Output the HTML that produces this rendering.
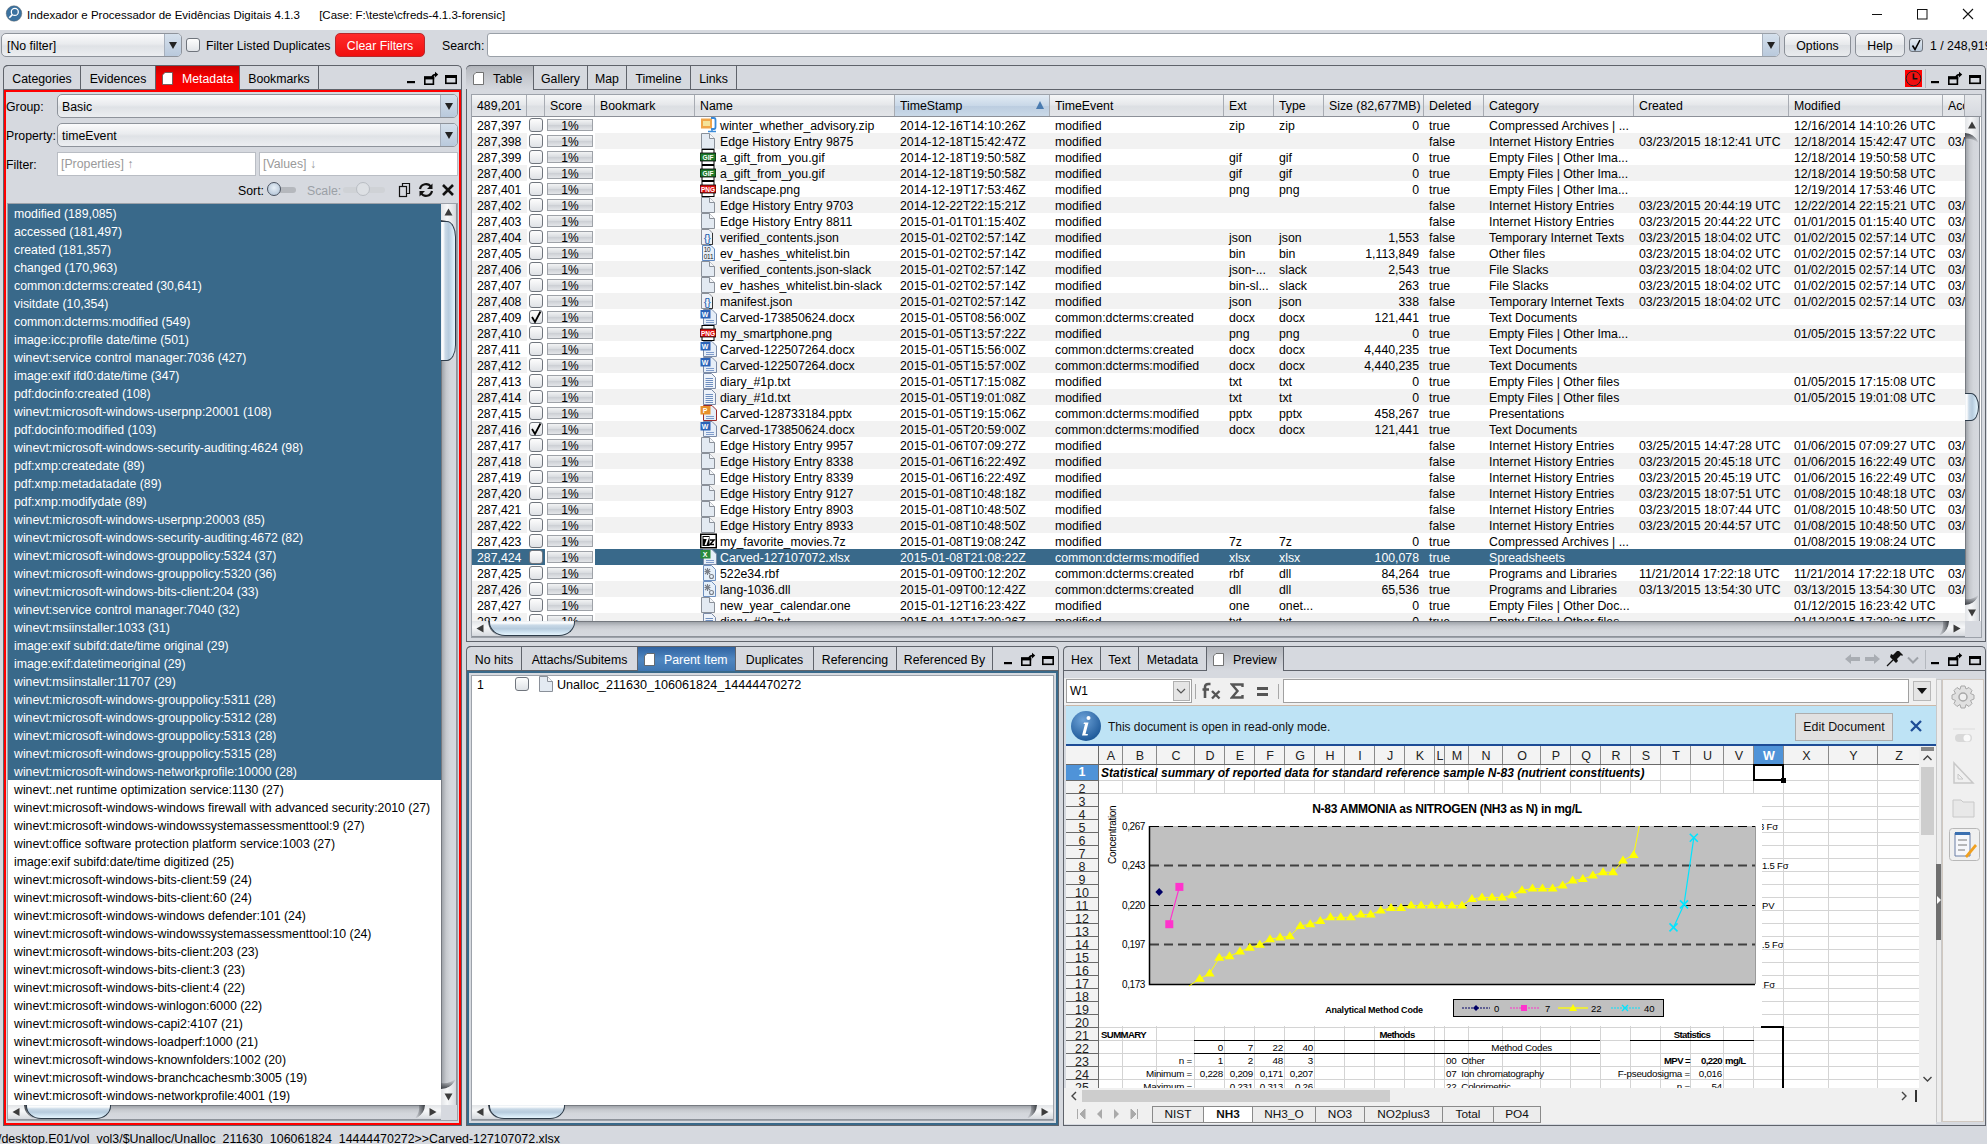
<!DOCTYPE html><html><head><meta charset="utf-8"><style>
*{margin:0;padding:0;box-sizing:border-box}
html,body{width:1987px;height:1144px;overflow:hidden;background:#d6d9df;font-family:"Liberation Sans",sans-serif;font-size:12.3px;color:#000}
div{position:absolute}
.t{white-space:pre;line-height:16px;height:16px}
.combo{border:1px solid #8e939b;border-radius:5px;background:linear-gradient(#fbfbfc,#e9ebee 45%,#dfe2e6 55%,#eceef1)}
.carr{position:absolute;right:0;top:0;bottom:0;width:17px;border-left:1px solid #a7b0bd;border-radius:0 4px 4px 0;background:linear-gradient(#d5e0ec,#b9c9dc)}
.carr:after{content:"";position:absolute;left:4px;top:8px;border-left:4.5px solid transparent;border-right:4.5px solid transparent;border-top:7px solid #222}
.btn{border:1px solid #8a8f97;border-radius:5px;background:linear-gradient(#fbfbfc,#e6e8eb 50%,#dcdfe3 52%,#e9ebee);text-align:center;line-height:24px}
.chk{border:1px solid #6f747c;border-radius:3px;background:linear-gradient(#fdfdfd,#e1e4e8)}
.tab{border:1px solid #6c7078;border-bottom:none;border-radius:0;line-height:22px;text-align:center;background:linear-gradient(#dfe2e6,#d3d6dc)}
.field{background:#fff;border:1px solid #b9bdc4}
</style></head><body><div style="left:0px;top:0px;width:1987px;height:30px;background:#fff"></div>
<svg style="position:absolute;left:5px;top:5px" width="18" height="18" viewBox="0 0 18 18"><circle cx="9" cy="8.5" r="7.8" fill="#3b72a0" stroke="#555" stroke-width="0.4"/><circle cx="9.8" cy="6.9" r="3.5" fill="#3b72a0" stroke="#fff" stroke-width="1.3"/><path d="M7.3 9.6 L4.3 12.8" stroke="#fff" stroke-width="1.6"/></svg>
<div class="t" style="left:27px;top:7px;font-size:11.5px">Indexador e Processador de Evidências Digitais 4.1.3      [Case: F:\teste\cfreds-4.1.3-forensic]</div>
<svg style="position:absolute;left:1866px;top:5px" width="112" height="18" viewBox="0 0 112 18"><path d="M6 9.5 H16" stroke="#111" stroke-width="1"/><rect x="51.5" y="4.5" width="9.5" height="9.5" fill="none" stroke="#111"/><path d="M97 4 L107 14 M107 4 L97 14" stroke="#111" stroke-width="1.1"/></svg>
<div class="combo" style="left:1px;top:33px;width:181px;height:24px;"><div class="t" style="left:5px;top:4px">[No filter]</div><div class="carr"></div></div>
<div class="chk" style="left:186px;top:38px;width:14px;height:14px;"></div>
<div class="t" style="left:206px;top:38px;">Filter Listed Duplicates</div>
<div style="left:335px;top:33px;width:90px;height:24px;background:linear-gradient(#ff2a2a,#f01010);border:1px solid #b8282b;border-radius:5px;color:#fff;text-align:center;line-height:24px">Clear Filters</div>
<div class="t" style="left:442px;top:38px;">Search:</div>
<div style="left:487px;top:33px;width:1293px;height:24px;background:#fff;border:1px solid #9aa0a8;border-radius:3px 5px 5px 3px"><div class="carr"></div></div>
<div class="btn" style="left:1784px;top:33px;width:67px;height:24px;">Options</div>
<div class="btn" style="left:1855px;top:33px;width:50px;height:24px;">Help</div>
<div class="chk" style="left:1909px;top:38px;width:14px;height:14px;background:linear-gradient(#e6edf5,#b7c8da)"><svg width="12" height="12" style="position:absolute;left:0;top:0"><path d="M2.5 6.5 L5 10.5 L10 1" stroke="#000" stroke-width="1.6" fill="none"/></svg></div>
<div class="t" style="left:1930px;top:38px;">1 / 248,919</div>
<div style="left:3px;top:65px;width:459px;height:25px;border:1px solid #5f636b;border-bottom:none;border-radius:5px 5px 0 0;background:#d6d9df"></div>
<div style="left:3px;top:65px;width:78px;height:25px;border-right:1px solid #5f636b;border-top:1px solid #5f636b;border-radius:5px 0 0 0;"></div>
<div style="left:80px;top:65px;width:76px;height:25px;border-right:1px solid #5f636b;border-left:1px solid #5f636b;border-top:1px solid #5f636b;"></div>
<div style="left:155px;top:65px;width:85px;height:25px;border-right:1px solid #5f636b;border-left:1px solid #5f636b;border-top:1px solid #5f636b;background:linear-gradient(#c80000,#f00000 40%,#ff0000);border-color:#5f636b;"></div>
<div style="left:239px;top:65px;width:80px;height:25px;border-right:1px solid #5f636b;border-left:1px solid #5f636b;border-top:1px solid #5f636b;"></div>
<div style="left:3px;top:89px;width:152px;height:1px;background:#5f636b"></div>
<div style="left:239px;top:89px;width:223px;height:1px;background:#5f636b"></div>
<div style="left:3px;top:89px;width:459px;height:1037px;border:1px solid #5f636b;border-top:none;border-left:1px solid #5f636b;"></div>
<div style="left:4px;top:90px;width:457px;height:1035px;border:2px solid #ff0000"></div>
<div class="t" style="left:3px;top:71px;width:78px;text-align:center;color:#000">Categories</div>
<div class="t" style="left:80px;top:71px;width:76px;text-align:center;color:#000">Evidences</div>
<svg style="position:absolute;left:162px;top:72px" width="11" height="13" viewBox="0 0 11 13"><path d="M3 0.5 H10.5 V12.5 H0.5 V3 Z" fill="#fff" stroke="#555" stroke-width="0.8"/></svg>
<div class="t" style="left:182px;top:71px;color:#fff">Metadata</div>
<div class="t" style="left:239px;top:71px;width:80px;text-align:center;color:#000">Bookmarks</div>
<svg style="position:absolute;left:406px;top:70px" width="52" height="16" viewBox="0 0 52 16"><rect x="1" y="11" width="8" height="2.2" fill="#000"/><rect x="18.8" y="7.2" width="8.6" height="7" fill="none" stroke="#000" stroke-width="1.6"/><rect x="18" y="6.4" width="10.2" height="3" fill="#000"/><path d="M26 7.5 Q26.5 4.6 29.5 4.6 H30" stroke="#000" stroke-width="1.6" fill="none"/><path d="M29 1.8 L32.2 4.6 L29 7.4 Z" fill="#000"/><rect x="39.8" y="5.8" width="10.4" height="7.5" fill="none" stroke="#000" stroke-width="1.6"/><rect x="39" y="5" width="12" height="3" fill="#000"/></svg>
<div class="t" style="left:6px;top:99px;">Group:</div>
<div class="combo" style="left:57px;top:94px;width:401px;height:24px;"><div class="t" style="left:4px;top:4px">Basic</div><div class="carr"></div></div>
<div class="t" style="left:6px;top:128px;">Property:</div>
<div class="combo" style="left:57px;top:123px;width:401px;height:24px;"><div class="t" style="left:4px;top:4px">timeEvent</div><div class="carr"></div></div>
<div class="t" style="left:6px;top:157px;">Filter:</div>
<div class="field" style="left:57px;top:152px;width:199px;height:24px;"><div class="t" style="left:3px;top:3px;color:#9a9a9a">[Properties] ↑</div></div>
<div class="field" style="left:259px;top:152px;width:199px;height:24px;"><div class="t" style="left:3px;top:3px;color:#9a9a9a">[Values] ↓</div></div>
<div class="t" style="left:238px;top:183px;">Sort:</div>
<div style="left:276px;top:187px;width:20px;height:6px;border-radius:3px;background:#b5b8bd"></div>
<div style="left:267px;top:182px;width:14px;height:14px;border-radius:7px;border:1px solid #4a5260;background:radial-gradient(circle at 50% 40%,#e8f0f8,#a9bcd0)"></div>
<div class="t" style="left:307px;top:183px;color:#9ba0a6">Scale:</div>
<div style="left:343px;top:187px;width:42px;height:6px;border-radius:3px;background:#cfd2d6"></div>
<div style="left:356px;top:182px;width:14px;height:14px;border-radius:7px;border:1px solid #b9bdc3;background:#dde0e4"></div>
<svg style="position:absolute;left:398px;top:182px" width="60" height="16" viewBox="0 0 60 16"><rect x="1.5" y="4.5" width="7" height="10" fill="none" stroke="#111" stroke-width="1.2"/><path d="M4.5 4.5 V1.5 H11.5 V11.5 H8.5" fill="none" stroke="#111" stroke-width="1.2"/><path d="M22 7 A6 6 0 0 1 33 5" fill="none" stroke="#111" stroke-width="2.2"/><path d="M34.5 1.5 V7 H29 Z" fill="#111"/><path d="M34 9 A6 6 0 0 1 23 11" fill="none" stroke="#111" stroke-width="2.2"/><path d="M21.5 14.5 V9 H27 Z" fill="#111"/><path d="M45 3 L55 13 M55 3 L45 13" stroke="#111" stroke-width="2.6"/></svg>
<div style="left:7px;top:203px;width:451px;height:918px;border:1px solid #9da2aa;background:#fff"></div>
<div style="left:8px;top:204px;width:433px;height:576px;background:#39698a"></div>
<div class="t" style="left:14px;top:206px;color:#fff">modified (189,085)</div>
<div class="t" style="left:14px;top:224px;color:#fff">accessed (181,497)</div>
<div class="t" style="left:14px;top:242px;color:#fff">created (181,357)</div>
<div class="t" style="left:14px;top:260px;color:#fff">changed (170,963)</div>
<div class="t" style="left:14px;top:278px;color:#fff">common:dcterms:created (30,641)</div>
<div class="t" style="left:14px;top:296px;color:#fff">visitdate (10,354)</div>
<div class="t" style="left:14px;top:314px;color:#fff">common:dcterms:modified (549)</div>
<div class="t" style="left:14px;top:332px;color:#fff">image:icc:profile date/time (501)</div>
<div class="t" style="left:14px;top:350px;color:#fff">winevt:service control manager:7036 (427)</div>
<div class="t" style="left:14px;top:368px;color:#fff">image:exif ifd0:date/time (347)</div>
<div class="t" style="left:14px;top:386px;color:#fff">pdf:docinfo:created (108)</div>
<div class="t" style="left:14px;top:404px;color:#fff">winevt:microsoft-windows-userpnp:20001 (108)</div>
<div class="t" style="left:14px;top:422px;color:#fff">pdf:docinfo:modified (103)</div>
<div class="t" style="left:14px;top:440px;color:#fff">winevt:microsoft-windows-security-auditing:4624 (98)</div>
<div class="t" style="left:14px;top:458px;color:#fff">pdf:xmp:createdate (89)</div>
<div class="t" style="left:14px;top:476px;color:#fff">pdf:xmp:metadatadate (89)</div>
<div class="t" style="left:14px;top:494px;color:#fff">pdf:xmp:modifydate (89)</div>
<div class="t" style="left:14px;top:512px;color:#fff">winevt:microsoft-windows-userpnp:20003 (85)</div>
<div class="t" style="left:14px;top:530px;color:#fff">winevt:microsoft-windows-security-auditing:4672 (82)</div>
<div class="t" style="left:14px;top:548px;color:#fff">winevt:microsoft-windows-grouppolicy:5324 (37)</div>
<div class="t" style="left:14px;top:566px;color:#fff">winevt:microsoft-windows-grouppolicy:5320 (36)</div>
<div class="t" style="left:14px;top:584px;color:#fff">winevt:microsoft-windows-bits-client:204 (33)</div>
<div class="t" style="left:14px;top:602px;color:#fff">winevt:service control manager:7040 (32)</div>
<div class="t" style="left:14px;top:620px;color:#fff">winevt:msiinstaller:1033 (31)</div>
<div class="t" style="left:14px;top:638px;color:#fff">image:exif subifd:date/time original (29)</div>
<div class="t" style="left:14px;top:656px;color:#fff">image:exif:datetimeoriginal (29)</div>
<div class="t" style="left:14px;top:674px;color:#fff">winevt:msiinstaller:11707 (29)</div>
<div class="t" style="left:14px;top:692px;color:#fff">winevt:microsoft-windows-grouppolicy:5311 (28)</div>
<div class="t" style="left:14px;top:710px;color:#fff">winevt:microsoft-windows-grouppolicy:5312 (28)</div>
<div class="t" style="left:14px;top:728px;color:#fff">winevt:microsoft-windows-grouppolicy:5313 (28)</div>
<div class="t" style="left:14px;top:746px;color:#fff">winevt:microsoft-windows-grouppolicy:5315 (28)</div>
<div class="t" style="left:14px;top:764px;color:#fff">winevt:microsoft-windows-networkprofile:10000 (28)</div>
<div class="t" style="left:14px;top:782px;color:#000">winevt:.net runtime optimization service:1130 (27)</div>
<div class="t" style="left:14px;top:800px;color:#000">winevt:microsoft-windows-windows firewall with advanced security:2010 (27)</div>
<div class="t" style="left:14px;top:818px;color:#000">winevt:microsoft-windows-windowssystemassessmenttool:9 (27)</div>
<div class="t" style="left:14px;top:836px;color:#000">winevt:office software protection platform service:1003 (27)</div>
<div class="t" style="left:14px;top:854px;color:#000">image:exif subifd:date/time digitized (25)</div>
<div class="t" style="left:14px;top:872px;color:#000">winevt:microsoft-windows-bits-client:59 (24)</div>
<div class="t" style="left:14px;top:890px;color:#000">winevt:microsoft-windows-bits-client:60 (24)</div>
<div class="t" style="left:14px;top:908px;color:#000">winevt:microsoft-windows-windows defender:101 (24)</div>
<div class="t" style="left:14px;top:926px;color:#000">winevt:microsoft-windows-windowssystemassessmenttool:10 (24)</div>
<div class="t" style="left:14px;top:944px;color:#000">winevt:microsoft-windows-bits-client:203 (23)</div>
<div class="t" style="left:14px;top:962px;color:#000">winevt:microsoft-windows-bits-client:3 (23)</div>
<div class="t" style="left:14px;top:980px;color:#000">winevt:microsoft-windows-bits-client:4 (22)</div>
<div class="t" style="left:14px;top:998px;color:#000">winevt:microsoft-windows-winlogon:6000 (22)</div>
<div class="t" style="left:14px;top:1016px;color:#000">winevt:microsoft-windows-capi2:4107 (21)</div>
<div class="t" style="left:14px;top:1034px;color:#000">winevt:microsoft-windows-loadperf:1000 (21)</div>
<div class="t" style="left:14px;top:1052px;color:#000">winevt:microsoft-windows-knownfolders:1002 (20)</div>
<div class="t" style="left:14px;top:1070px;color:#000">winevt:microsoft-windows-branchcachesmb:3005 (19)</div>
<div class="t" style="left:14px;top:1088px;color:#000">winevt:microsoft-windows-networkprofile:4001 (19)</div>
<div style="left:441px;top:204px;width:16px;height:901px;background:linear-gradient(90deg,#5d6168,#a4a8ae 10%,#c6c9ce 35%,#d3d6db 60%,#d6d9df);border-right:1px solid #8d9299"></div>
<svg style="position:absolute;left:441px;top:204px" width="15" height="26" viewBox="0 0 15 26"><defs><linearGradient id="cg1" x1="0" y1="0" x2="1" y2="0"><stop offset="0" stop-color="#e2e4e7"/><stop offset="0.45" stop-color="#f7f8f9"/><stop offset="1" stop-color="#dadde1"/></linearGradient><linearGradient id="cg1s" x1="0" y1="0" x2="0" y2="1"><stop offset="0" stop-color="#5a5e64" stop-opacity="0"/><stop offset="1" stop-color="#303338" stop-opacity="0.9"/></linearGradient></defs><g transform="matrix(1,0,0,-1,0,26)"><path d="M0 4 Q9 5 14 0 V2 Q9 10 0 10 Z" fill="url(#cg1s)"/><path d="M0 26 V10 Q9 10 14 2 V26 Z" fill="url(#cg1)"/><path d="M3.5 14.5 H11.5 L7.5 21.5 Z" fill="#3c3c3c"/></g></svg>
<svg style="position:absolute;left:441px;top:1079px" width="15" height="26" viewBox="0 0 15 26"><defs><linearGradient id="cg2" x1="0" y1="0" x2="1" y2="0"><stop offset="0" stop-color="#e2e4e7"/><stop offset="0.45" stop-color="#f7f8f9"/><stop offset="1" stop-color="#dadde1"/></linearGradient><linearGradient id="cg2s" x1="0" y1="0" x2="0" y2="1"><stop offset="0" stop-color="#5a5e64" stop-opacity="0"/><stop offset="1" stop-color="#303338" stop-opacity="0.9"/></linearGradient></defs><g transform="matrix(1,0,0,1,0,0)"><path d="M0 4 Q9 5 14 0 V2 Q9 10 0 10 Z" fill="url(#cg2s)"/><path d="M0 26 V10 Q9 10 14 2 V26 Z" fill="url(#cg2)"/><path d="M3.5 14.5 H11.5 L7.5 21.5 Z" fill="#3c3c3c"/></g></svg>
<div style="left:441px;top:221px;width:15px;height:140px;border:1px solid #2e3c4a;border-left:none;border-radius:0 9px 9px 0 / 0 16px 16px 0;background:linear-gradient(90deg,#e9eef3,#ffffff 14%,#c9d9e7 30%,#b6cbdd 55%,#cfe3f1 80%,#e6f5fd)"></div>
<div style="left:8px;top:1105px;width:433px;height:15px;background:linear-gradient(#5d6168,#a4a8ae 10%,#c6c9ce 35%,#d3d6db 60%,#d6d9df);border-bottom:1px solid #8d9299"></div>
<svg style="position:absolute;left:8px;top:1105px" width="26" height="14" viewBox="0 0 26 14"><defs><linearGradient id="cg3" x1="0" y1="0" x2="1" y2="0"><stop offset="0" stop-color="#e2e4e7"/><stop offset="0.45" stop-color="#f7f8f9"/><stop offset="1" stop-color="#dadde1"/></linearGradient><linearGradient id="cg3s" x1="0" y1="0" x2="0" y2="1"><stop offset="0" stop-color="#5a5e64" stop-opacity="0"/><stop offset="1" stop-color="#303338" stop-opacity="0.9"/></linearGradient></defs><g transform="matrix(0,1,-1,0,26,0)"><path d="M0 4 Q8 5 13 0 V2 Q8 10 0 10 Z" fill="url(#cg3s)"/><path d="M0 26 V10 Q8 10 13 2 V26 Z" fill="url(#cg3)"/><path d="M3.0 14.5 H11.0 L7.0 21.5 Z" fill="#3c3c3c"/></g></svg>
<svg style="position:absolute;left:415px;top:1105px" width="26" height="14" viewBox="0 0 26 14"><defs><linearGradient id="cg4" x1="0" y1="0" x2="1" y2="0"><stop offset="0" stop-color="#e2e4e7"/><stop offset="0.45" stop-color="#f7f8f9"/><stop offset="1" stop-color="#dadde1"/></linearGradient><linearGradient id="cg4s" x1="0" y1="0" x2="0" y2="1"><stop offset="0" stop-color="#5a5e64" stop-opacity="0"/><stop offset="1" stop-color="#303338" stop-opacity="0.9"/></linearGradient></defs><g transform="matrix(0,1,1,0,0,0)"><path d="M0 4 Q8 5 13 0 V2 Q8 10 0 10 Z" fill="url(#cg4s)"/><path d="M0 26 V10 Q8 10 13 2 V26 Z" fill="url(#cg4)"/><path d="M3.0 14.5 H11.0 L7.0 21.5 Z" fill="#3c3c3c"/></g></svg>
<div style="left:26px;top:1105px;width:85px;height:14px;border:1px solid #2e3c4a;border-top:none;border-radius:0 0 15px 15px / 0 0 13px 13px;background:linear-gradient(#e9eef3,#ffffff 14%,#c9d9e7 30%,#b6cbdd 55%,#cfe3f1 80%,#e6f5fd)"></div>
<div style="left:441px;top:1105px;width:16px;height:15px;background:#d6d9df"></div>
<div style="left:466px;top:65px;width:1520px;height:25px;border:1px solid #5f636b;border-bottom:none;border-radius:5px 5px 0 0;background:#d6d9df"></div>
<div style="left:466px;top:65px;width:68px;height:25px;border-right:1px solid #5f636b;border-top:1px solid #5f636b;border-radius:5px 0 0 0;background:linear-gradient(#b3b6bc,#c9ccd2 60%,#d6d9df);"></div>
<div style="left:533px;top:65px;width:55px;height:25px;border-right:1px solid #5f636b;border-left:1px solid #5f636b;border-top:1px solid #5f636b;"></div>
<div style="left:587px;top:65px;width:40px;height:25px;border-right:1px solid #5f636b;border-left:1px solid #5f636b;border-top:1px solid #5f636b;"></div>
<div style="left:626px;top:65px;width:65px;height:25px;border-right:1px solid #5f636b;border-left:1px solid #5f636b;border-top:1px solid #5f636b;"></div>
<div style="left:690px;top:65px;width:47px;height:25px;border-right:1px solid #5f636b;border-left:1px solid #5f636b;border-top:1px solid #5f636b;"></div>
<div style="left:466px;top:89px;width:0px;height:1px;background:#5f636b"></div>
<div style="left:533px;top:89px;width:1453px;height:1px;background:#5f636b"></div>
<div style="left:466px;top:89px;width:1520px;height:553px;border:1px solid #5f636b;border-top:none;"></div>
<svg style="position:absolute;left:473px;top:72px" width="11" height="13" viewBox="0 0 11 13"><path d="M3 0.5 H10.5 V12.5 H0.5 V3 Z" fill="#fff" stroke="#555" stroke-width="0.8"/></svg>
<div class="t" style="left:493px;top:71px;color:#000">Table</div>
<div class="t" style="left:533px;top:71px;width:55px;text-align:center;color:#000">Gallery</div>
<div class="t" style="left:587px;top:71px;width:40px;text-align:center;color:#000">Map</div>
<div class="t" style="left:626px;top:71px;width:65px;text-align:center;color:#000">Timeline</div>
<div class="t" style="left:690px;top:71px;width:47px;text-align:center;color:#000">Links</div>
<svg style="position:absolute;left:1905px;top:70px" width="17" height="17" viewBox="0 0 17 17"><rect width="17" height="17" fill="#f00"/><circle cx="8.5" cy="8.5" r="7.3" fill="#f01010" stroke="#222" stroke-width="1"/><path d="M8.5 3.5 V8.8 H12.5" stroke="#111" stroke-width="1.6" fill="none"/></svg>
<div style="left:1925px;top:69px;width:1px;height:19px;background:#b4b8be"></div>
<svg style="position:absolute;left:1930px;top:70px" width="52" height="16" viewBox="0 0 52 16"><rect x="1" y="11" width="8" height="2.2" fill="#000"/><rect x="18.8" y="7.2" width="8.6" height="7" fill="none" stroke="#000" stroke-width="1.6"/><rect x="18" y="6.4" width="10.2" height="3" fill="#000"/><path d="M26 7.5 Q26.5 4.6 29.5 4.6 H30" stroke="#000" stroke-width="1.6" fill="none"/><path d="M29 1.8 L32.2 4.6 L29 7.4 Z" fill="#000"/><rect x="39.8" y="5.8" width="10.4" height="7.5" fill="none" stroke="#000" stroke-width="1.6"/><rect x="39" y="5" width="12" height="3" fill="#000"/></svg>
<div style="left:471px;top:94px;width:1511px;height:544px;border:1px solid #9da2aa;background:#fff"></div>
<div style="left:472px;top:95px;width:1493px;height:22px;background:linear-gradient(#f6f7f8,#e6e8eb 45%,#dcdfe3 55%,#e3e5e8);border-bottom:1px solid #8c9098"></div>
<div style="left:895px;top:95px;width:155px;height:22px;background:linear-gradient(#e2ebf4,#c9d8e8 50%,#bccde0 55%,#cad9e8);border-bottom:1px solid #8c9098"></div>
<div style="left:526px;top:95px;width:1px;height:21px;background:#a8acb3"></div>
<div class="t" style="left:477px;top:98px;width:49px;overflow:hidden">489,201</div>
<div style="left:544px;top:95px;width:1px;height:21px;background:#a8acb3"></div>
<div style="left:594px;top:95px;width:1px;height:21px;background:#a8acb3"></div>
<div class="t" style="left:550px;top:98px;width:44px;overflow:hidden">Score</div>
<div style="left:694px;top:95px;width:1px;height:21px;background:#a8acb3"></div>
<div class="t" style="left:600px;top:98px;width:94px;overflow:hidden">Bookmark</div>
<div style="left:894px;top:95px;width:1px;height:21px;background:#a8acb3"></div>
<div class="t" style="left:700px;top:98px;width:194px;overflow:hidden">Name</div>
<div style="left:1049px;top:95px;width:1px;height:21px;background:#a8acb3"></div>
<div class="t" style="left:900px;top:98px;width:149px;overflow:hidden">TimeStamp</div>
<div style="left:1223px;top:95px;width:1px;height:21px;background:#a8acb3"></div>
<div class="t" style="left:1055px;top:98px;width:168px;overflow:hidden">TimeEvent</div>
<div style="left:1273px;top:95px;width:1px;height:21px;background:#a8acb3"></div>
<div class="t" style="left:1229px;top:98px;width:44px;overflow:hidden">Ext</div>
<div style="left:1323px;top:95px;width:1px;height:21px;background:#a8acb3"></div>
<div class="t" style="left:1279px;top:98px;width:44px;overflow:hidden">Type</div>
<div style="left:1423px;top:95px;width:1px;height:21px;background:#a8acb3"></div>
<div class="t" style="left:1329px;top:98px;width:94px;overflow:hidden">Size (82,677MB)</div>
<div style="left:1483px;top:95px;width:1px;height:21px;background:#a8acb3"></div>
<div class="t" style="left:1429px;top:98px;width:54px;overflow:hidden">Deleted</div>
<div style="left:1633px;top:95px;width:1px;height:21px;background:#a8acb3"></div>
<div class="t" style="left:1489px;top:98px;width:144px;overflow:hidden">Category</div>
<div style="left:1788px;top:95px;width:1px;height:21px;background:#a8acb3"></div>
<div class="t" style="left:1639px;top:98px;width:149px;overflow:hidden">Created</div>
<div style="left:1942px;top:95px;width:1px;height:21px;background:#a8acb3"></div>
<div class="t" style="left:1794px;top:98px;width:148px;overflow:hidden">Modified</div>
<div style="left:1964px;top:95px;width:1px;height:21px;background:#a8acb3"></div>
<div class="t" style="left:1948px;top:98px;width:16px;overflow:hidden">Acc</div>
<div style="left:1036px;top:101px;width:0;height:0;border-left:4.5px solid transparent;border-right:4.5px solid transparent;border-bottom:8px solid #4a7bb0"></div>
<div style="left:1965px;top:95px;width:16px;height:22px;background:linear-gradient(#e6e8eb,#d6d9df);border-bottom:1px solid #8c9098"></div>
<div class="t" style="left:477px;top:118px;color:#000">287,397</div>
<div style="left:529px;top:118px;width:14px;height:14px;border:1px solid #70757d;border-radius:3px;background:linear-gradient(#fdfdfd,#dfe2e6)"></div>
<div style="left:547px;top:119px;width:46px;height:12px;border:1px solid #9ea2a8;background:linear-gradient(#f2f3f4,#d8dbdf 50%,#cdd0d5 55%,#e4e6e9);text-align:center;line-height:12px;font-size:12px">1%</div>
<svg style="position:absolute;left:700px;top:117px" width="17" height="16" viewBox="0 0 17 16"><rect x="1" y="1.5" width="11" height="10" fill="#f0a64a"/><rect x="3" y="4" width="7" height="5" fill="#f4e39a"/><path d="M11 1 H14 Q15.5 1 15.5 3 V10 Q15.5 12 14 12 H11" fill="none" stroke="#3a8ad8" stroke-width="1.8"/><path d="M8 14.5 H16" stroke="#3a8ad8" stroke-width="1.5"/><path d="M12 12 V14" stroke="#3a8ad8" stroke-width="1.5"/></svg>
<div class="t" style="left:720px;top:118px;color:#000">winter_whether_advisory.zip</div>
<div class="t" style="left:900px;top:118px;color:#000">2014-12-16T14:10:26Z</div>
<div class="t" style="left:1055px;top:118px;color:#000">modified</div>
<div class="t" style="left:1229px;top:118px;color:#000">zip</div>
<div class="t" style="left:1279px;top:118px;color:#000">zip</div>
<div class="t" style="left:1219px;width:200px;text-align:right;top:118px;color:#000">0</div>
<div class="t" style="left:1429px;top:118px;color:#000">true</div>
<div class="t" style="left:1489px;top:118px;color:#000">Compressed Archives | ...</div>
<div class="t" style="left:1794px;top:118px;color:#000">12/16/2014 14:10:26 UTC</div>
<div style="left:472px;top:133px;width:55px;height:16px;background:#f2f2f2"></div>
<div style="left:595px;top:133px;width:1370px;height:16px;background:#f2f2f2"></div>
<div class="t" style="left:477px;top:134px;color:#000">287,398</div>
<div style="left:529px;top:134px;width:14px;height:14px;border:1px solid #70757d;border-radius:3px;background:linear-gradient(#fdfdfd,#dfe2e6)"></div>
<div style="left:547px;top:135px;width:46px;height:12px;border:1px solid #9ea2a8;background:linear-gradient(#f2f3f4,#d8dbdf 50%,#cdd0d5 55%,#e4e6e9);text-align:center;line-height:12px;font-size:12px">1%</div>
<svg style="position:absolute;left:700px;top:133px" width="16" height="16" viewBox="0 0 16 16"><path d="M1.5 0.5 H9.5 L14.5 5.5 V15.5 H1.5 Z" fill="#e3eaf2" stroke="#8a9099"/><path d="M9.5 0.5 V5.5 H14.5" fill="#f4f6f9" stroke="#8a9099"/></svg>
<div class="t" style="left:720px;top:134px;color:#000">Edge History Entry 9875</div>
<div class="t" style="left:900px;top:134px;color:#000">2014-12-18T15:42:47Z</div>
<div class="t" style="left:1055px;top:134px;color:#000">modified</div>
<div class="t" style="left:1429px;top:134px;color:#000">false</div>
<div class="t" style="left:1489px;top:134px;color:#000">Internet History Entries</div>
<div class="t" style="left:1639px;top:134px;color:#000">03/23/2015 18:12:41 UTC</div>
<div class="t" style="left:1794px;top:134px;color:#000">12/18/2014 15:42:47 UTC</div>
<div class="t" style="left:1948px;top:134px;width:17px;overflow:hidden;color:#000">03/</div>
<div class="t" style="left:477px;top:150px;color:#000">287,399</div>
<div style="left:529px;top:150px;width:14px;height:14px;border:1px solid #70757d;border-radius:3px;background:linear-gradient(#fdfdfd,#dfe2e6)"></div>
<div style="left:547px;top:151px;width:46px;height:12px;border:1px solid #9ea2a8;background:linear-gradient(#f2f3f4,#d8dbdf 50%,#cdd0d5 55%,#e4e6e9);text-align:center;line-height:12px;font-size:12px">1%</div>
<svg style="position:absolute;left:700px;top:149px" width="16" height="16" viewBox="0 0 16 16"><rect x="2" y="0.5" width="12" height="15" fill="#fff" stroke="#000"/><rect x="0" y="4" width="16" height="8" fill="#1e7a2a" stroke="#000" stroke-width="0.8"/><text x="8" y="10.6" font-size="6.5" font-family="Liberation Sans" font-weight="bold" fill="#fff" text-anchor="middle">GIF</text></svg>
<div class="t" style="left:720px;top:150px;color:#000">a_gift_from_you.gif</div>
<div class="t" style="left:900px;top:150px;color:#000">2014-12-18T19:50:58Z</div>
<div class="t" style="left:1055px;top:150px;color:#000">modified</div>
<div class="t" style="left:1229px;top:150px;color:#000">gif</div>
<div class="t" style="left:1279px;top:150px;color:#000">gif</div>
<div class="t" style="left:1219px;width:200px;text-align:right;top:150px;color:#000">0</div>
<div class="t" style="left:1429px;top:150px;color:#000">true</div>
<div class="t" style="left:1489px;top:150px;color:#000">Empty Files | Other Ima...</div>
<div class="t" style="left:1794px;top:150px;color:#000">12/18/2014 19:50:58 UTC</div>
<div style="left:472px;top:165px;width:55px;height:16px;background:#f2f2f2"></div>
<div style="left:595px;top:165px;width:1370px;height:16px;background:#f2f2f2"></div>
<div class="t" style="left:477px;top:166px;color:#000">287,400</div>
<div style="left:529px;top:166px;width:14px;height:14px;border:1px solid #70757d;border-radius:3px;background:linear-gradient(#fdfdfd,#dfe2e6)"></div>
<div style="left:547px;top:167px;width:46px;height:12px;border:1px solid #9ea2a8;background:linear-gradient(#f2f3f4,#d8dbdf 50%,#cdd0d5 55%,#e4e6e9);text-align:center;line-height:12px;font-size:12px">1%</div>
<svg style="position:absolute;left:700px;top:165px" width="16" height="16" viewBox="0 0 16 16"><rect x="2" y="0.5" width="12" height="15" fill="#fff" stroke="#000"/><rect x="0" y="4" width="16" height="8" fill="#1e7a2a" stroke="#000" stroke-width="0.8"/><text x="8" y="10.6" font-size="6.5" font-family="Liberation Sans" font-weight="bold" fill="#fff" text-anchor="middle">GIF</text></svg>
<div class="t" style="left:720px;top:166px;color:#000">a_gift_from_you.gif</div>
<div class="t" style="left:900px;top:166px;color:#000">2014-12-18T19:50:58Z</div>
<div class="t" style="left:1055px;top:166px;color:#000">modified</div>
<div class="t" style="left:1229px;top:166px;color:#000">gif</div>
<div class="t" style="left:1279px;top:166px;color:#000">gif</div>
<div class="t" style="left:1219px;width:200px;text-align:right;top:166px;color:#000">0</div>
<div class="t" style="left:1429px;top:166px;color:#000">true</div>
<div class="t" style="left:1489px;top:166px;color:#000">Empty Files | Other Ima...</div>
<div class="t" style="left:1794px;top:166px;color:#000">12/18/2014 19:50:58 UTC</div>
<div class="t" style="left:477px;top:182px;color:#000">287,401</div>
<div style="left:529px;top:182px;width:14px;height:14px;border:1px solid #70757d;border-radius:3px;background:linear-gradient(#fdfdfd,#dfe2e6)"></div>
<div style="left:547px;top:183px;width:46px;height:12px;border:1px solid #9ea2a8;background:linear-gradient(#f2f3f4,#d8dbdf 50%,#cdd0d5 55%,#e4e6e9);text-align:center;line-height:12px;font-size:12px">1%</div>
<svg style="position:absolute;left:700px;top:181px" width="16" height="16" viewBox="0 0 16 16"><rect x="2" y="0.5" width="12" height="15" fill="#fff" stroke="#000"/><rect x="0" y="4" width="16" height="8" fill="#e01010" stroke="#000" stroke-width="0.8"/><text x="8" y="10.6" font-size="6.5" font-family="Liberation Sans" font-weight="bold" fill="#fff" text-anchor="middle">PNG</text></svg>
<div class="t" style="left:720px;top:182px;color:#000">landscape.png</div>
<div class="t" style="left:900px;top:182px;color:#000">2014-12-19T17:53:46Z</div>
<div class="t" style="left:1055px;top:182px;color:#000">modified</div>
<div class="t" style="left:1229px;top:182px;color:#000">png</div>
<div class="t" style="left:1279px;top:182px;color:#000">png</div>
<div class="t" style="left:1219px;width:200px;text-align:right;top:182px;color:#000">0</div>
<div class="t" style="left:1429px;top:182px;color:#000">true</div>
<div class="t" style="left:1489px;top:182px;color:#000">Empty Files | Other Ima...</div>
<div class="t" style="left:1794px;top:182px;color:#000">12/19/2014 17:53:46 UTC</div>
<div style="left:472px;top:197px;width:55px;height:16px;background:#f2f2f2"></div>
<div style="left:595px;top:197px;width:1370px;height:16px;background:#f2f2f2"></div>
<div class="t" style="left:477px;top:198px;color:#000">287,402</div>
<div style="left:529px;top:198px;width:14px;height:14px;border:1px solid #70757d;border-radius:3px;background:linear-gradient(#fdfdfd,#dfe2e6)"></div>
<div style="left:547px;top:199px;width:46px;height:12px;border:1px solid #9ea2a8;background:linear-gradient(#f2f3f4,#d8dbdf 50%,#cdd0d5 55%,#e4e6e9);text-align:center;line-height:12px;font-size:12px">1%</div>
<svg style="position:absolute;left:700px;top:197px" width="16" height="16" viewBox="0 0 16 16"><path d="M1.5 0.5 H9.5 L14.5 5.5 V15.5 H1.5 Z" fill="#e3eaf2" stroke="#8a9099"/><path d="M9.5 0.5 V5.5 H14.5" fill="#f4f6f9" stroke="#8a9099"/></svg>
<div class="t" style="left:720px;top:198px;color:#000">Edge History Entry 9703</div>
<div class="t" style="left:900px;top:198px;color:#000">2014-12-22T22:15:21Z</div>
<div class="t" style="left:1055px;top:198px;color:#000">modified</div>
<div class="t" style="left:1429px;top:198px;color:#000">false</div>
<div class="t" style="left:1489px;top:198px;color:#000">Internet History Entries</div>
<div class="t" style="left:1639px;top:198px;color:#000">03/23/2015 20:44:19 UTC</div>
<div class="t" style="left:1794px;top:198px;color:#000">12/22/2014 22:15:21 UTC</div>
<div class="t" style="left:1948px;top:198px;width:17px;overflow:hidden;color:#000">03/</div>
<div class="t" style="left:477px;top:214px;color:#000">287,403</div>
<div style="left:529px;top:214px;width:14px;height:14px;border:1px solid #70757d;border-radius:3px;background:linear-gradient(#fdfdfd,#dfe2e6)"></div>
<div style="left:547px;top:215px;width:46px;height:12px;border:1px solid #9ea2a8;background:linear-gradient(#f2f3f4,#d8dbdf 50%,#cdd0d5 55%,#e4e6e9);text-align:center;line-height:12px;font-size:12px">1%</div>
<svg style="position:absolute;left:700px;top:213px" width="16" height="16" viewBox="0 0 16 16"><path d="M1.5 0.5 H9.5 L14.5 5.5 V15.5 H1.5 Z" fill="#e3eaf2" stroke="#8a9099"/><path d="M9.5 0.5 V5.5 H14.5" fill="#f4f6f9" stroke="#8a9099"/></svg>
<div class="t" style="left:720px;top:214px;color:#000">Edge History Entry 8811</div>
<div class="t" style="left:900px;top:214px;color:#000">2015-01-01T01:15:40Z</div>
<div class="t" style="left:1055px;top:214px;color:#000">modified</div>
<div class="t" style="left:1429px;top:214px;color:#000">false</div>
<div class="t" style="left:1489px;top:214px;color:#000">Internet History Entries</div>
<div class="t" style="left:1639px;top:214px;color:#000">03/23/2015 20:44:22 UTC</div>
<div class="t" style="left:1794px;top:214px;color:#000">01/01/2015 01:15:40 UTC</div>
<div class="t" style="left:1948px;top:214px;width:17px;overflow:hidden;color:#000">03/</div>
<div style="left:472px;top:229px;width:55px;height:16px;background:#f2f2f2"></div>
<div style="left:595px;top:229px;width:1370px;height:16px;background:#f2f2f2"></div>
<div class="t" style="left:477px;top:230px;color:#000">287,404</div>
<div style="left:529px;top:230px;width:14px;height:14px;border:1px solid #70757d;border-radius:3px;background:linear-gradient(#fdfdfd,#dfe2e6)"></div>
<div style="left:547px;top:231px;width:46px;height:12px;border:1px solid #9ea2a8;background:linear-gradient(#f2f3f4,#d8dbdf 50%,#cdd0d5 55%,#e4e6e9);text-align:center;line-height:12px;font-size:12px">1%</div>
<svg style="position:absolute;left:700px;top:229px" width="14" height="16" viewBox="0 0 14 16"><path d="M1.5 0.5 H9 L12.5 4 V15.5 H1.5 Z" fill="#eef2f7" stroke="#8a8f96"/><text x="7" y="12.5" font-size="11.5" font-family="Liberation Sans" fill="#1f5fae" text-anchor="middle" letter-spacing="-0.5">{}</text><path d="M12.5 4 V15.5 H9" stroke="#333" stroke-width="1" fill="none"/></svg>
<div class="t" style="left:720px;top:230px;color:#000">verified_contents.json</div>
<div class="t" style="left:900px;top:230px;color:#000">2015-01-02T02:57:14Z</div>
<div class="t" style="left:1055px;top:230px;color:#000">modified</div>
<div class="t" style="left:1229px;top:230px;color:#000">json</div>
<div class="t" style="left:1279px;top:230px;color:#000">json</div>
<div class="t" style="left:1219px;width:200px;text-align:right;top:230px;color:#000">1,553</div>
<div class="t" style="left:1429px;top:230px;color:#000">false</div>
<div class="t" style="left:1489px;top:230px;color:#000">Temporary Internet Texts</div>
<div class="t" style="left:1639px;top:230px;color:#000">03/23/2015 18:04:02 UTC</div>
<div class="t" style="left:1794px;top:230px;color:#000">01/02/2015 02:57:14 UTC</div>
<div class="t" style="left:1948px;top:230px;width:17px;overflow:hidden;color:#000">03/</div>
<div class="t" style="left:477px;top:246px;color:#000">287,405</div>
<div style="left:529px;top:246px;width:14px;height:14px;border:1px solid #70757d;border-radius:3px;background:linear-gradient(#fdfdfd,#dfe2e6)"></div>
<div style="left:547px;top:247px;width:46px;height:12px;border:1px solid #9ea2a8;background:linear-gradient(#f2f3f4,#d8dbdf 50%,#cdd0d5 55%,#e4e6e9);text-align:center;line-height:12px;font-size:12px">1%</div>
<svg style="position:absolute;left:701px;top:245px" width="15" height="16" viewBox="0 0 15 16"><path d="M1.5 0.5 H10 L13.5 4 V15.5 H1.5 Z" fill="#e8f0f8" stroke="#5f88c0"/><text x="6" y="7" font-size="6.5" font-family="Liberation Sans" fill="#222" text-anchor="middle" letter-spacing="-0.3">10</text><text x="7.5" y="14" font-size="6.5" font-family="Liberation Sans" fill="#222" text-anchor="middle" letter-spacing="-0.3">011</text></svg>
<div class="t" style="left:720px;top:246px;color:#000">ev_hashes_whitelist.bin</div>
<div class="t" style="left:900px;top:246px;color:#000">2015-01-02T02:57:14Z</div>
<div class="t" style="left:1055px;top:246px;color:#000">modified</div>
<div class="t" style="left:1229px;top:246px;color:#000">bin</div>
<div class="t" style="left:1279px;top:246px;color:#000">bin</div>
<div class="t" style="left:1219px;width:200px;text-align:right;top:246px;color:#000">1,113,849</div>
<div class="t" style="left:1429px;top:246px;color:#000">false</div>
<div class="t" style="left:1489px;top:246px;color:#000">Other files</div>
<div class="t" style="left:1639px;top:246px;color:#000">03/23/2015 18:04:02 UTC</div>
<div class="t" style="left:1794px;top:246px;color:#000">01/02/2015 02:57:14 UTC</div>
<div class="t" style="left:1948px;top:246px;width:17px;overflow:hidden;color:#000">03/</div>
<div style="left:472px;top:261px;width:55px;height:16px;background:#f2f2f2"></div>
<div style="left:595px;top:261px;width:1370px;height:16px;background:#f2f2f2"></div>
<div class="t" style="left:477px;top:262px;color:#000">287,406</div>
<div style="left:529px;top:262px;width:14px;height:14px;border:1px solid #70757d;border-radius:3px;background:linear-gradient(#fdfdfd,#dfe2e6)"></div>
<div style="left:547px;top:263px;width:46px;height:12px;border:1px solid #9ea2a8;background:linear-gradient(#f2f3f4,#d8dbdf 50%,#cdd0d5 55%,#e4e6e9);text-align:center;line-height:12px;font-size:12px">1%</div>
<svg style="position:absolute;left:700px;top:261px" width="16" height="16" viewBox="0 0 16 16"><path d="M1.5 0.5 H9.5 L14.5 5.5 V15.5 H1.5 Z" fill="#e3eaf2" stroke="#8a9099"/><path d="M9.5 0.5 V5.5 H14.5" fill="#f4f6f9" stroke="#8a9099"/></svg>
<div class="t" style="left:720px;top:262px;color:#000">verified_contents.json-slack</div>
<div class="t" style="left:900px;top:262px;color:#000">2015-01-02T02:57:14Z</div>
<div class="t" style="left:1055px;top:262px;color:#000">modified</div>
<div class="t" style="left:1229px;top:262px;color:#000">json-...</div>
<div class="t" style="left:1279px;top:262px;color:#000">slack</div>
<div class="t" style="left:1219px;width:200px;text-align:right;top:262px;color:#000">2,543</div>
<div class="t" style="left:1429px;top:262px;color:#000">true</div>
<div class="t" style="left:1489px;top:262px;color:#000">File Slacks</div>
<div class="t" style="left:1639px;top:262px;color:#000">03/23/2015 18:04:02 UTC</div>
<div class="t" style="left:1794px;top:262px;color:#000">01/02/2015 02:57:14 UTC</div>
<div class="t" style="left:1948px;top:262px;width:17px;overflow:hidden;color:#000">03/</div>
<div class="t" style="left:477px;top:278px;color:#000">287,407</div>
<div style="left:529px;top:278px;width:14px;height:14px;border:1px solid #70757d;border-radius:3px;background:linear-gradient(#fdfdfd,#dfe2e6)"></div>
<div style="left:547px;top:279px;width:46px;height:12px;border:1px solid #9ea2a8;background:linear-gradient(#f2f3f4,#d8dbdf 50%,#cdd0d5 55%,#e4e6e9);text-align:center;line-height:12px;font-size:12px">1%</div>
<svg style="position:absolute;left:700px;top:277px" width="16" height="16" viewBox="0 0 16 16"><path d="M1.5 0.5 H9.5 L14.5 5.5 V15.5 H1.5 Z" fill="#e3eaf2" stroke="#8a9099"/><path d="M9.5 0.5 V5.5 H14.5" fill="#f4f6f9" stroke="#8a9099"/></svg>
<div class="t" style="left:720px;top:278px;color:#000">ev_hashes_whitelist.bin-slack</div>
<div class="t" style="left:900px;top:278px;color:#000">2015-01-02T02:57:14Z</div>
<div class="t" style="left:1055px;top:278px;color:#000">modified</div>
<div class="t" style="left:1229px;top:278px;color:#000">bin-sl...</div>
<div class="t" style="left:1279px;top:278px;color:#000">slack</div>
<div class="t" style="left:1219px;width:200px;text-align:right;top:278px;color:#000">263</div>
<div class="t" style="left:1429px;top:278px;color:#000">true</div>
<div class="t" style="left:1489px;top:278px;color:#000">File Slacks</div>
<div class="t" style="left:1639px;top:278px;color:#000">03/23/2015 18:04:02 UTC</div>
<div class="t" style="left:1794px;top:278px;color:#000">01/02/2015 02:57:14 UTC</div>
<div class="t" style="left:1948px;top:278px;width:17px;overflow:hidden;color:#000">03/</div>
<div style="left:472px;top:293px;width:55px;height:16px;background:#f2f2f2"></div>
<div style="left:595px;top:293px;width:1370px;height:16px;background:#f2f2f2"></div>
<div class="t" style="left:477px;top:294px;color:#000">287,408</div>
<div style="left:529px;top:294px;width:14px;height:14px;border:1px solid #70757d;border-radius:3px;background:linear-gradient(#fdfdfd,#dfe2e6)"></div>
<div style="left:547px;top:295px;width:46px;height:12px;border:1px solid #9ea2a8;background:linear-gradient(#f2f3f4,#d8dbdf 50%,#cdd0d5 55%,#e4e6e9);text-align:center;line-height:12px;font-size:12px">1%</div>
<svg style="position:absolute;left:700px;top:293px" width="14" height="16" viewBox="0 0 14 16"><path d="M1.5 0.5 H9 L12.5 4 V15.5 H1.5 Z" fill="#eef2f7" stroke="#8a8f96"/><text x="7" y="12.5" font-size="11.5" font-family="Liberation Sans" fill="#1f5fae" text-anchor="middle" letter-spacing="-0.5">{}</text><path d="M12.5 4 V15.5 H9" stroke="#333" stroke-width="1" fill="none"/></svg>
<div class="t" style="left:720px;top:294px;color:#000">manifest.json</div>
<div class="t" style="left:900px;top:294px;color:#000">2015-01-02T02:57:14Z</div>
<div class="t" style="left:1055px;top:294px;color:#000">modified</div>
<div class="t" style="left:1229px;top:294px;color:#000">json</div>
<div class="t" style="left:1279px;top:294px;color:#000">json</div>
<div class="t" style="left:1219px;width:200px;text-align:right;top:294px;color:#000">338</div>
<div class="t" style="left:1429px;top:294px;color:#000">false</div>
<div class="t" style="left:1489px;top:294px;color:#000">Temporary Internet Texts</div>
<div class="t" style="left:1639px;top:294px;color:#000">03/23/2015 18:04:02 UTC</div>
<div class="t" style="left:1794px;top:294px;color:#000">01/02/2015 02:57:14 UTC</div>
<div class="t" style="left:1948px;top:294px;width:17px;overflow:hidden;color:#000">03/</div>
<div class="t" style="left:477px;top:310px;color:#000">287,409</div>
<div style="left:529px;top:310px;width:14px;height:14px;border:1px solid #70757d;border-radius:3px;background:linear-gradient(#fdfdfd,#dfe2e6)"></div>
<svg style="position:absolute;left:529px;top:310px" width="14" height="14"><path d="M3 7 L6 12 L11.5 1.5" stroke="#000" stroke-width="1.8" fill="none"/></svg>
<div style="left:547px;top:311px;width:46px;height:12px;border:1px solid #9ea2a8;background:linear-gradient(#f2f3f4,#d8dbdf 50%,#cdd0d5 55%,#e4e6e9);text-align:center;line-height:12px;font-size:12px">1%</div>
<svg style="position:absolute;left:700px;top:309px" width="17" height="16" viewBox="0 0 17 16"><path d="M3.5 0.5 H12 L16.5 5 V15.5 H3.5 Z" fill="#e6eef8" stroke="#7a8aa6"/><path d="M6 11.5H14M6 13.5H14" stroke="#7f9ccc"/><rect x="0.5" y="1" width="10" height="8.5" fill="#2b63b8"/><text x="5" y="8" font-size="7" font-family="Liberation Sans" font-weight="bold" fill="#fff" text-anchor="middle">W</text></svg>
<div class="t" style="left:720px;top:310px;color:#000">Carved-173850624.docx</div>
<div class="t" style="left:900px;top:310px;color:#000">2015-01-05T08:56:00Z</div>
<div class="t" style="left:1055px;top:310px;color:#000">common:dcterms:created</div>
<div class="t" style="left:1229px;top:310px;color:#000">docx</div>
<div class="t" style="left:1279px;top:310px;color:#000">docx</div>
<div class="t" style="left:1219px;width:200px;text-align:right;top:310px;color:#000">121,441</div>
<div class="t" style="left:1429px;top:310px;color:#000">true</div>
<div class="t" style="left:1489px;top:310px;color:#000">Text Documents</div>
<div style="left:472px;top:325px;width:55px;height:16px;background:#f2f2f2"></div>
<div style="left:595px;top:325px;width:1370px;height:16px;background:#f2f2f2"></div>
<div class="t" style="left:477px;top:326px;color:#000">287,410</div>
<div style="left:529px;top:326px;width:14px;height:14px;border:1px solid #70757d;border-radius:3px;background:linear-gradient(#fdfdfd,#dfe2e6)"></div>
<div style="left:547px;top:327px;width:46px;height:12px;border:1px solid #9ea2a8;background:linear-gradient(#f2f3f4,#d8dbdf 50%,#cdd0d5 55%,#e4e6e9);text-align:center;line-height:12px;font-size:12px">1%</div>
<svg style="position:absolute;left:700px;top:325px" width="16" height="16" viewBox="0 0 16 16"><rect x="2" y="0.5" width="12" height="15" fill="#fff" stroke="#000"/><rect x="0" y="4" width="16" height="8" fill="#e01010" stroke="#000" stroke-width="0.8"/><text x="8" y="10.6" font-size="6.5" font-family="Liberation Sans" font-weight="bold" fill="#fff" text-anchor="middle">PNG</text></svg>
<div class="t" style="left:720px;top:326px;color:#000">my_smartphone.png</div>
<div class="t" style="left:900px;top:326px;color:#000">2015-01-05T13:57:22Z</div>
<div class="t" style="left:1055px;top:326px;color:#000">modified</div>
<div class="t" style="left:1229px;top:326px;color:#000">png</div>
<div class="t" style="left:1279px;top:326px;color:#000">png</div>
<div class="t" style="left:1219px;width:200px;text-align:right;top:326px;color:#000">0</div>
<div class="t" style="left:1429px;top:326px;color:#000">true</div>
<div class="t" style="left:1489px;top:326px;color:#000">Empty Files | Other Ima...</div>
<div class="t" style="left:1794px;top:326px;color:#000">01/05/2015 13:57:22 UTC</div>
<div class="t" style="left:477px;top:342px;color:#000">287,411</div>
<div style="left:529px;top:342px;width:14px;height:14px;border:1px solid #70757d;border-radius:3px;background:linear-gradient(#fdfdfd,#dfe2e6)"></div>
<div style="left:547px;top:343px;width:46px;height:12px;border:1px solid #9ea2a8;background:linear-gradient(#f2f3f4,#d8dbdf 50%,#cdd0d5 55%,#e4e6e9);text-align:center;line-height:12px;font-size:12px">1%</div>
<svg style="position:absolute;left:700px;top:341px" width="17" height="16" viewBox="0 0 17 16"><path d="M3.5 0.5 H12 L16.5 5 V15.5 H3.5 Z" fill="#e6eef8" stroke="#7a8aa6"/><path d="M6 11.5H14M6 13.5H14" stroke="#7f9ccc"/><rect x="0.5" y="1" width="10" height="8.5" fill="#2b63b8"/><text x="5" y="8" font-size="7" font-family="Liberation Sans" font-weight="bold" fill="#fff" text-anchor="middle">W</text></svg>
<div class="t" style="left:720px;top:342px;color:#000">Carved-122507264.docx</div>
<div class="t" style="left:900px;top:342px;color:#000">2015-01-05T15:56:00Z</div>
<div class="t" style="left:1055px;top:342px;color:#000">common:dcterms:created</div>
<div class="t" style="left:1229px;top:342px;color:#000">docx</div>
<div class="t" style="left:1279px;top:342px;color:#000">docx</div>
<div class="t" style="left:1219px;width:200px;text-align:right;top:342px;color:#000">4,440,235</div>
<div class="t" style="left:1429px;top:342px;color:#000">true</div>
<div class="t" style="left:1489px;top:342px;color:#000">Text Documents</div>
<div style="left:472px;top:357px;width:55px;height:16px;background:#f2f2f2"></div>
<div style="left:595px;top:357px;width:1370px;height:16px;background:#f2f2f2"></div>
<div class="t" style="left:477px;top:358px;color:#000">287,412</div>
<div style="left:529px;top:358px;width:14px;height:14px;border:1px solid #70757d;border-radius:3px;background:linear-gradient(#fdfdfd,#dfe2e6)"></div>
<div style="left:547px;top:359px;width:46px;height:12px;border:1px solid #9ea2a8;background:linear-gradient(#f2f3f4,#d8dbdf 50%,#cdd0d5 55%,#e4e6e9);text-align:center;line-height:12px;font-size:12px">1%</div>
<svg style="position:absolute;left:700px;top:357px" width="17" height="16" viewBox="0 0 17 16"><path d="M3.5 0.5 H12 L16.5 5 V15.5 H3.5 Z" fill="#e6eef8" stroke="#7a8aa6"/><path d="M6 11.5H14M6 13.5H14" stroke="#7f9ccc"/><rect x="0.5" y="1" width="10" height="8.5" fill="#2b63b8"/><text x="5" y="8" font-size="7" font-family="Liberation Sans" font-weight="bold" fill="#fff" text-anchor="middle">W</text></svg>
<div class="t" style="left:720px;top:358px;color:#000">Carved-122507264.docx</div>
<div class="t" style="left:900px;top:358px;color:#000">2015-01-05T15:57:00Z</div>
<div class="t" style="left:1055px;top:358px;color:#000">common:dcterms:modified</div>
<div class="t" style="left:1229px;top:358px;color:#000">docx</div>
<div class="t" style="left:1279px;top:358px;color:#000">docx</div>
<div class="t" style="left:1219px;width:200px;text-align:right;top:358px;color:#000">4,440,235</div>
<div class="t" style="left:1429px;top:358px;color:#000">true</div>
<div class="t" style="left:1489px;top:358px;color:#000">Text Documents</div>
<div class="t" style="left:477px;top:374px;color:#000">287,413</div>
<div style="left:529px;top:374px;width:14px;height:14px;border:1px solid #70757d;border-radius:3px;background:linear-gradient(#fdfdfd,#dfe2e6)"></div>
<div style="left:547px;top:375px;width:46px;height:12px;border:1px solid #9ea2a8;background:linear-gradient(#f2f3f4,#d8dbdf 50%,#cdd0d5 55%,#e4e6e9);text-align:center;line-height:12px;font-size:12px">1%</div>
<svg style="position:absolute;left:702px;top:373px" width="15" height="16" viewBox="0 0 15 16"><path d="M1.5 0.5 H9.5 L13.5 4.5 V15.5 H1.5 Z" fill="#eef3fa" stroke="#7a8aa6"/><path d="M3.5 5.5H11M3.5 7.5H11M3.5 9.5H11M3.5 11.5H11M3.5 13.5H11" stroke="#6f8fc0"/></svg>
<div class="t" style="left:720px;top:374px;color:#000">diary_#1p.txt</div>
<div class="t" style="left:900px;top:374px;color:#000">2015-01-05T17:15:08Z</div>
<div class="t" style="left:1055px;top:374px;color:#000">modified</div>
<div class="t" style="left:1229px;top:374px;color:#000">txt</div>
<div class="t" style="left:1279px;top:374px;color:#000">txt</div>
<div class="t" style="left:1219px;width:200px;text-align:right;top:374px;color:#000">0</div>
<div class="t" style="left:1429px;top:374px;color:#000">true</div>
<div class="t" style="left:1489px;top:374px;color:#000">Empty Files | Other files</div>
<div class="t" style="left:1794px;top:374px;color:#000">01/05/2015 17:15:08 UTC</div>
<div style="left:472px;top:389px;width:55px;height:16px;background:#f2f2f2"></div>
<div style="left:595px;top:389px;width:1370px;height:16px;background:#f2f2f2"></div>
<div class="t" style="left:477px;top:390px;color:#000">287,414</div>
<div style="left:529px;top:390px;width:14px;height:14px;border:1px solid #70757d;border-radius:3px;background:linear-gradient(#fdfdfd,#dfe2e6)"></div>
<div style="left:547px;top:391px;width:46px;height:12px;border:1px solid #9ea2a8;background:linear-gradient(#f2f3f4,#d8dbdf 50%,#cdd0d5 55%,#e4e6e9);text-align:center;line-height:12px;font-size:12px">1%</div>
<svg style="position:absolute;left:702px;top:389px" width="15" height="16" viewBox="0 0 15 16"><path d="M1.5 0.5 H9.5 L13.5 4.5 V15.5 H1.5 Z" fill="#eef3fa" stroke="#7a8aa6"/><path d="M3.5 5.5H11M3.5 7.5H11M3.5 9.5H11M3.5 11.5H11M3.5 13.5H11" stroke="#6f8fc0"/></svg>
<div class="t" style="left:720px;top:390px;color:#000">diary_#1d.txt</div>
<div class="t" style="left:900px;top:390px;color:#000">2015-01-05T19:01:08Z</div>
<div class="t" style="left:1055px;top:390px;color:#000">modified</div>
<div class="t" style="left:1229px;top:390px;color:#000">txt</div>
<div class="t" style="left:1279px;top:390px;color:#000">txt</div>
<div class="t" style="left:1219px;width:200px;text-align:right;top:390px;color:#000">0</div>
<div class="t" style="left:1429px;top:390px;color:#000">true</div>
<div class="t" style="left:1489px;top:390px;color:#000">Empty Files | Other files</div>
<div class="t" style="left:1794px;top:390px;color:#000">01/05/2015 19:01:08 UTC</div>
<div class="t" style="left:477px;top:406px;color:#000">287,415</div>
<div style="left:529px;top:406px;width:14px;height:14px;border:1px solid #70757d;border-radius:3px;background:linear-gradient(#fdfdfd,#dfe2e6)"></div>
<div style="left:547px;top:407px;width:46px;height:12px;border:1px solid #9ea2a8;background:linear-gradient(#f2f3f4,#d8dbdf 50%,#cdd0d5 55%,#e4e6e9);text-align:center;line-height:12px;font-size:12px">1%</div>
<svg style="position:absolute;left:700px;top:405px" width="17" height="16" viewBox="0 0 17 16"><path d="M3.5 0.5 H12 L16.5 5 V15.5 H3.5 Z" fill="#e6eef8" stroke="#9a2a2a"/><path d="M6 11.5H14M6 13.5H14" stroke="#7f9ccc"/><rect x="0.5" y="1" width="10" height="8.5" fill="#e8902a"/><text x="5" y="8" font-size="7" font-family="Liberation Sans" font-weight="bold" fill="#fff" text-anchor="middle">P</text></svg>
<div class="t" style="left:720px;top:406px;color:#000">Carved-128733184.pptx</div>
<div class="t" style="left:900px;top:406px;color:#000">2015-01-05T19:15:06Z</div>
<div class="t" style="left:1055px;top:406px;color:#000">common:dcterms:modified</div>
<div class="t" style="left:1229px;top:406px;color:#000">pptx</div>
<div class="t" style="left:1279px;top:406px;color:#000">pptx</div>
<div class="t" style="left:1219px;width:200px;text-align:right;top:406px;color:#000">458,267</div>
<div class="t" style="left:1429px;top:406px;color:#000">true</div>
<div class="t" style="left:1489px;top:406px;color:#000">Presentations</div>
<div style="left:472px;top:421px;width:55px;height:16px;background:#f2f2f2"></div>
<div style="left:595px;top:421px;width:1370px;height:16px;background:#f2f2f2"></div>
<div class="t" style="left:477px;top:422px;color:#000">287,416</div>
<div style="left:529px;top:422px;width:14px;height:14px;border:1px solid #70757d;border-radius:3px;background:linear-gradient(#fdfdfd,#dfe2e6)"></div>
<svg style="position:absolute;left:529px;top:422px" width="14" height="14"><path d="M3 7 L6 12 L11.5 1.5" stroke="#000" stroke-width="1.8" fill="none"/></svg>
<div style="left:547px;top:423px;width:46px;height:12px;border:1px solid #9ea2a8;background:linear-gradient(#f2f3f4,#d8dbdf 50%,#cdd0d5 55%,#e4e6e9);text-align:center;line-height:12px;font-size:12px">1%</div>
<svg style="position:absolute;left:700px;top:421px" width="17" height="16" viewBox="0 0 17 16"><path d="M3.5 0.5 H12 L16.5 5 V15.5 H3.5 Z" fill="#e6eef8" stroke="#7a8aa6"/><path d="M6 11.5H14M6 13.5H14" stroke="#7f9ccc"/><rect x="0.5" y="1" width="10" height="8.5" fill="#2b63b8"/><text x="5" y="8" font-size="7" font-family="Liberation Sans" font-weight="bold" fill="#fff" text-anchor="middle">W</text></svg>
<div class="t" style="left:720px;top:422px;color:#000">Carved-173850624.docx</div>
<div class="t" style="left:900px;top:422px;color:#000">2015-01-05T20:59:00Z</div>
<div class="t" style="left:1055px;top:422px;color:#000">common:dcterms:modified</div>
<div class="t" style="left:1229px;top:422px;color:#000">docx</div>
<div class="t" style="left:1279px;top:422px;color:#000">docx</div>
<div class="t" style="left:1219px;width:200px;text-align:right;top:422px;color:#000">121,441</div>
<div class="t" style="left:1429px;top:422px;color:#000">true</div>
<div class="t" style="left:1489px;top:422px;color:#000">Text Documents</div>
<div class="t" style="left:477px;top:438px;color:#000">287,417</div>
<div style="left:529px;top:438px;width:14px;height:14px;border:1px solid #70757d;border-radius:3px;background:linear-gradient(#fdfdfd,#dfe2e6)"></div>
<div style="left:547px;top:439px;width:46px;height:12px;border:1px solid #9ea2a8;background:linear-gradient(#f2f3f4,#d8dbdf 50%,#cdd0d5 55%,#e4e6e9);text-align:center;line-height:12px;font-size:12px">1%</div>
<svg style="position:absolute;left:700px;top:437px" width="16" height="16" viewBox="0 0 16 16"><path d="M1.5 0.5 H9.5 L14.5 5.5 V15.5 H1.5 Z" fill="#e3eaf2" stroke="#8a9099"/><path d="M9.5 0.5 V5.5 H14.5" fill="#f4f6f9" stroke="#8a9099"/></svg>
<div class="t" style="left:720px;top:438px;color:#000">Edge History Entry 9957</div>
<div class="t" style="left:900px;top:438px;color:#000">2015-01-06T07:09:27Z</div>
<div class="t" style="left:1055px;top:438px;color:#000">modified</div>
<div class="t" style="left:1429px;top:438px;color:#000">false</div>
<div class="t" style="left:1489px;top:438px;color:#000">Internet History Entries</div>
<div class="t" style="left:1639px;top:438px;color:#000">03/25/2015 14:47:28 UTC</div>
<div class="t" style="left:1794px;top:438px;color:#000">01/06/2015 07:09:27 UTC</div>
<div class="t" style="left:1948px;top:438px;width:17px;overflow:hidden;color:#000">03/</div>
<div style="left:472px;top:453px;width:55px;height:16px;background:#f2f2f2"></div>
<div style="left:595px;top:453px;width:1370px;height:16px;background:#f2f2f2"></div>
<div class="t" style="left:477px;top:454px;color:#000">287,418</div>
<div style="left:529px;top:454px;width:14px;height:14px;border:1px solid #70757d;border-radius:3px;background:linear-gradient(#fdfdfd,#dfe2e6)"></div>
<div style="left:547px;top:455px;width:46px;height:12px;border:1px solid #9ea2a8;background:linear-gradient(#f2f3f4,#d8dbdf 50%,#cdd0d5 55%,#e4e6e9);text-align:center;line-height:12px;font-size:12px">1%</div>
<svg style="position:absolute;left:700px;top:453px" width="16" height="16" viewBox="0 0 16 16"><path d="M1.5 0.5 H9.5 L14.5 5.5 V15.5 H1.5 Z" fill="#e3eaf2" stroke="#8a9099"/><path d="M9.5 0.5 V5.5 H14.5" fill="#f4f6f9" stroke="#8a9099"/></svg>
<div class="t" style="left:720px;top:454px;color:#000">Edge History Entry 8338</div>
<div class="t" style="left:900px;top:454px;color:#000">2015-01-06T16:22:49Z</div>
<div class="t" style="left:1055px;top:454px;color:#000">modified</div>
<div class="t" style="left:1429px;top:454px;color:#000">false</div>
<div class="t" style="left:1489px;top:454px;color:#000">Internet History Entries</div>
<div class="t" style="left:1639px;top:454px;color:#000">03/23/2015 20:45:18 UTC</div>
<div class="t" style="left:1794px;top:454px;color:#000">01/06/2015 16:22:49 UTC</div>
<div class="t" style="left:1948px;top:454px;width:17px;overflow:hidden;color:#000">03/</div>
<div class="t" style="left:477px;top:470px;color:#000">287,419</div>
<div style="left:529px;top:470px;width:14px;height:14px;border:1px solid #70757d;border-radius:3px;background:linear-gradient(#fdfdfd,#dfe2e6)"></div>
<div style="left:547px;top:471px;width:46px;height:12px;border:1px solid #9ea2a8;background:linear-gradient(#f2f3f4,#d8dbdf 50%,#cdd0d5 55%,#e4e6e9);text-align:center;line-height:12px;font-size:12px">1%</div>
<svg style="position:absolute;left:700px;top:469px" width="16" height="16" viewBox="0 0 16 16"><path d="M1.5 0.5 H9.5 L14.5 5.5 V15.5 H1.5 Z" fill="#e3eaf2" stroke="#8a9099"/><path d="M9.5 0.5 V5.5 H14.5" fill="#f4f6f9" stroke="#8a9099"/></svg>
<div class="t" style="left:720px;top:470px;color:#000">Edge History Entry 8339</div>
<div class="t" style="left:900px;top:470px;color:#000">2015-01-06T16:22:49Z</div>
<div class="t" style="left:1055px;top:470px;color:#000">modified</div>
<div class="t" style="left:1429px;top:470px;color:#000">false</div>
<div class="t" style="left:1489px;top:470px;color:#000">Internet History Entries</div>
<div class="t" style="left:1639px;top:470px;color:#000">03/23/2015 20:45:19 UTC</div>
<div class="t" style="left:1794px;top:470px;color:#000">01/06/2015 16:22:49 UTC</div>
<div class="t" style="left:1948px;top:470px;width:17px;overflow:hidden;color:#000">03/</div>
<div style="left:472px;top:485px;width:55px;height:16px;background:#f2f2f2"></div>
<div style="left:595px;top:485px;width:1370px;height:16px;background:#f2f2f2"></div>
<div class="t" style="left:477px;top:486px;color:#000">287,420</div>
<div style="left:529px;top:486px;width:14px;height:14px;border:1px solid #70757d;border-radius:3px;background:linear-gradient(#fdfdfd,#dfe2e6)"></div>
<div style="left:547px;top:487px;width:46px;height:12px;border:1px solid #9ea2a8;background:linear-gradient(#f2f3f4,#d8dbdf 50%,#cdd0d5 55%,#e4e6e9);text-align:center;line-height:12px;font-size:12px">1%</div>
<svg style="position:absolute;left:700px;top:485px" width="16" height="16" viewBox="0 0 16 16"><path d="M1.5 0.5 H9.5 L14.5 5.5 V15.5 H1.5 Z" fill="#e3eaf2" stroke="#8a9099"/><path d="M9.5 0.5 V5.5 H14.5" fill="#f4f6f9" stroke="#8a9099"/></svg>
<div class="t" style="left:720px;top:486px;color:#000">Edge History Entry 9127</div>
<div class="t" style="left:900px;top:486px;color:#000">2015-01-08T10:48:18Z</div>
<div class="t" style="left:1055px;top:486px;color:#000">modified</div>
<div class="t" style="left:1429px;top:486px;color:#000">false</div>
<div class="t" style="left:1489px;top:486px;color:#000">Internet History Entries</div>
<div class="t" style="left:1639px;top:486px;color:#000">03/23/2015 18:07:51 UTC</div>
<div class="t" style="left:1794px;top:486px;color:#000">01/08/2015 10:48:18 UTC</div>
<div class="t" style="left:1948px;top:486px;width:17px;overflow:hidden;color:#000">03/</div>
<div class="t" style="left:477px;top:502px;color:#000">287,421</div>
<div style="left:529px;top:502px;width:14px;height:14px;border:1px solid #70757d;border-radius:3px;background:linear-gradient(#fdfdfd,#dfe2e6)"></div>
<div style="left:547px;top:503px;width:46px;height:12px;border:1px solid #9ea2a8;background:linear-gradient(#f2f3f4,#d8dbdf 50%,#cdd0d5 55%,#e4e6e9);text-align:center;line-height:12px;font-size:12px">1%</div>
<svg style="position:absolute;left:700px;top:501px" width="16" height="16" viewBox="0 0 16 16"><path d="M1.5 0.5 H9.5 L14.5 5.5 V15.5 H1.5 Z" fill="#e3eaf2" stroke="#8a9099"/><path d="M9.5 0.5 V5.5 H14.5" fill="#f4f6f9" stroke="#8a9099"/></svg>
<div class="t" style="left:720px;top:502px;color:#000">Edge History Entry 8903</div>
<div class="t" style="left:900px;top:502px;color:#000">2015-01-08T10:48:50Z</div>
<div class="t" style="left:1055px;top:502px;color:#000">modified</div>
<div class="t" style="left:1429px;top:502px;color:#000">false</div>
<div class="t" style="left:1489px;top:502px;color:#000">Internet History Entries</div>
<div class="t" style="left:1639px;top:502px;color:#000">03/23/2015 18:07:44 UTC</div>
<div class="t" style="left:1794px;top:502px;color:#000">01/08/2015 10:48:50 UTC</div>
<div class="t" style="left:1948px;top:502px;width:17px;overflow:hidden;color:#000">03/</div>
<div style="left:472px;top:517px;width:55px;height:16px;background:#f2f2f2"></div>
<div style="left:595px;top:517px;width:1370px;height:16px;background:#f2f2f2"></div>
<div class="t" style="left:477px;top:518px;color:#000">287,422</div>
<div style="left:529px;top:518px;width:14px;height:14px;border:1px solid #70757d;border-radius:3px;background:linear-gradient(#fdfdfd,#dfe2e6)"></div>
<div style="left:547px;top:519px;width:46px;height:12px;border:1px solid #9ea2a8;background:linear-gradient(#f2f3f4,#d8dbdf 50%,#cdd0d5 55%,#e4e6e9);text-align:center;line-height:12px;font-size:12px">1%</div>
<svg style="position:absolute;left:700px;top:517px" width="16" height="16" viewBox="0 0 16 16"><path d="M1.5 0.5 H9.5 L14.5 5.5 V15.5 H1.5 Z" fill="#e3eaf2" stroke="#8a9099"/><path d="M9.5 0.5 V5.5 H14.5" fill="#f4f6f9" stroke="#8a9099"/></svg>
<div class="t" style="left:720px;top:518px;color:#000">Edge History Entry 8933</div>
<div class="t" style="left:900px;top:518px;color:#000">2015-01-08T10:48:50Z</div>
<div class="t" style="left:1055px;top:518px;color:#000">modified</div>
<div class="t" style="left:1429px;top:518px;color:#000">false</div>
<div class="t" style="left:1489px;top:518px;color:#000">Internet History Entries</div>
<div class="t" style="left:1639px;top:518px;color:#000">03/23/2015 20:44:57 UTC</div>
<div class="t" style="left:1794px;top:518px;color:#000">01/08/2015 10:48:50 UTC</div>
<div class="t" style="left:1948px;top:518px;width:17px;overflow:hidden;color:#000">03/</div>
<div class="t" style="left:477px;top:534px;color:#000">287,423</div>
<div style="left:529px;top:534px;width:14px;height:14px;border:1px solid #70757d;border-radius:3px;background:linear-gradient(#fdfdfd,#dfe2e6)"></div>
<div style="left:547px;top:535px;width:46px;height:12px;border:1px solid #9ea2a8;background:linear-gradient(#f2f3f4,#d8dbdf 50%,#cdd0d5 55%,#e4e6e9);text-align:center;line-height:12px;font-size:12px">1%</div>
<svg style="position:absolute;left:700px;top:533px" width="17" height="16" viewBox="0 0 17 16"><rect x="0.75" y="1.25" width="15.5" height="13.5" fill="#fff" stroke="#000" stroke-width="1.5"/><rect x="2.5" y="3" width="7" height="10" fill="#000"/><path d="M3.5 5 H8 L5.5 12" stroke="#fff" stroke-width="1.8" fill="none"/><path d="M10 7 H14 L10 11.5 H14" stroke="#000" stroke-width="1.5" fill="none"/></svg>
<div class="t" style="left:720px;top:534px;color:#000">my_favorite_movies.7z</div>
<div class="t" style="left:900px;top:534px;color:#000">2015-01-08T19:08:24Z</div>
<div class="t" style="left:1055px;top:534px;color:#000">modified</div>
<div class="t" style="left:1229px;top:534px;color:#000">7z</div>
<div class="t" style="left:1279px;top:534px;color:#000">7z</div>
<div class="t" style="left:1219px;width:200px;text-align:right;top:534px;color:#000">0</div>
<div class="t" style="left:1429px;top:534px;color:#000">true</div>
<div class="t" style="left:1489px;top:534px;color:#000">Compressed Archives | ...</div>
<div class="t" style="left:1794px;top:534px;color:#000">01/08/2015 19:08:24 UTC</div>
<div style="left:472px;top:549px;width:73px;height:16px;background:#39698a"></div>
<div style="left:595px;top:549px;width:1370px;height:16px;background:#39698a"></div>
<div class="t" style="left:477px;top:550px;color:#fff">287,424</div>
<div style="left:529px;top:550px;width:14px;height:14px;border:1px solid #70757d;border-radius:3px;background:linear-gradient(#fdfdfd,#dfe2e6)"></div>
<div style="left:547px;top:551px;width:46px;height:12px;border:1px solid #9ea2a8;background:linear-gradient(#f2f3f4,#d8dbdf 50%,#cdd0d5 55%,#e4e6e9);text-align:center;line-height:12px;font-size:12px">1%</div>
<svg style="position:absolute;left:700px;top:549px" width="17" height="16" viewBox="0 0 17 16"><path d="M3.5 0.5 H12 L16.5 5 V15.5 H3.5 Z" fill="#e6eef8" stroke="#7a8aa6"/><path d="M6 11.5H14M6 13.5H14" stroke="#7f9ccc"/><rect x="0.5" y="1" width="10" height="8.5" fill="#2a8a3a"/><text x="5" y="8" font-size="7" font-family="Liberation Sans" font-weight="bold" fill="#fff" text-anchor="middle">X</text></svg>
<div class="t" style="left:720px;top:550px;color:#fff">Carved-127107072.xlsx</div>
<div class="t" style="left:900px;top:550px;color:#fff">2015-01-08T21:08:22Z</div>
<div class="t" style="left:1055px;top:550px;color:#fff">common:dcterms:modified</div>
<div class="t" style="left:1229px;top:550px;color:#fff">xlsx</div>
<div class="t" style="left:1279px;top:550px;color:#fff">xlsx</div>
<div class="t" style="left:1219px;width:200px;text-align:right;top:550px;color:#fff">100,078</div>
<div class="t" style="left:1429px;top:550px;color:#fff">true</div>
<div class="t" style="left:1489px;top:550px;color:#fff">Spreadsheets</div>
<div class="t" style="left:477px;top:566px;color:#000">287,425</div>
<div style="left:529px;top:566px;width:14px;height:14px;border:1px solid #70757d;border-radius:3px;background:linear-gradient(#fdfdfd,#dfe2e6)"></div>
<div style="left:547px;top:567px;width:46px;height:12px;border:1px solid #9ea2a8;background:linear-gradient(#f2f3f4,#d8dbdf 50%,#cdd0d5 55%,#e4e6e9);text-align:center;line-height:12px;font-size:12px">1%</div>
<svg style="position:absolute;left:702px;top:565px" width="15" height="16" viewBox="0 0 15 16"><path d="M1.5 0.5 H9.5 L13.5 4.5 V15.5 H1.5 Z" fill="#e6f0fa" stroke="#6d8fbf"/><path d="M3 4 L8 9 M8 4 L3 9 M5.5 3 V10 M2.5 6.5 H8.5" stroke="#7a7f88" stroke-width="1.1"/><circle cx="9.5" cy="11.5" r="2" fill="none" stroke="#7a7f88" stroke-width="1.1"/></svg>
<div class="t" style="left:720px;top:566px;color:#000">522e34.rbf</div>
<div class="t" style="left:900px;top:566px;color:#000">2015-01-09T00:12:20Z</div>
<div class="t" style="left:1055px;top:566px;color:#000">common:dcterms:created</div>
<div class="t" style="left:1229px;top:566px;color:#000">rbf</div>
<div class="t" style="left:1279px;top:566px;color:#000">dll</div>
<div class="t" style="left:1219px;width:200px;text-align:right;top:566px;color:#000">84,264</div>
<div class="t" style="left:1429px;top:566px;color:#000">true</div>
<div class="t" style="left:1489px;top:566px;color:#000">Programs and Libraries</div>
<div class="t" style="left:1639px;top:566px;color:#000">11/21/2014 17:22:18 UTC</div>
<div class="t" style="left:1794px;top:566px;color:#000">11/21/2014 17:22:18 UTC</div>
<div class="t" style="left:1948px;top:566px;width:17px;overflow:hidden;color:#000">03/</div>
<div style="left:472px;top:581px;width:55px;height:16px;background:#f2f2f2"></div>
<div style="left:595px;top:581px;width:1370px;height:16px;background:#f2f2f2"></div>
<div class="t" style="left:477px;top:582px;color:#000">287,426</div>
<div style="left:529px;top:582px;width:14px;height:14px;border:1px solid #70757d;border-radius:3px;background:linear-gradient(#fdfdfd,#dfe2e6)"></div>
<div style="left:547px;top:583px;width:46px;height:12px;border:1px solid #9ea2a8;background:linear-gradient(#f2f3f4,#d8dbdf 50%,#cdd0d5 55%,#e4e6e9);text-align:center;line-height:12px;font-size:12px">1%</div>
<svg style="position:absolute;left:702px;top:581px" width="15" height="16" viewBox="0 0 15 16"><path d="M1.5 0.5 H9.5 L13.5 4.5 V15.5 H1.5 Z" fill="#e6f0fa" stroke="#6d8fbf"/><path d="M3 4 L8 9 M8 4 L3 9 M5.5 3 V10 M2.5 6.5 H8.5" stroke="#7a7f88" stroke-width="1.1"/><circle cx="9.5" cy="11.5" r="2" fill="none" stroke="#7a7f88" stroke-width="1.1"/></svg>
<div class="t" style="left:720px;top:582px;color:#000">lang-1036.dll</div>
<div class="t" style="left:900px;top:582px;color:#000">2015-01-09T00:12:42Z</div>
<div class="t" style="left:1055px;top:582px;color:#000">common:dcterms:created</div>
<div class="t" style="left:1229px;top:582px;color:#000">dll</div>
<div class="t" style="left:1279px;top:582px;color:#000">dll</div>
<div class="t" style="left:1219px;width:200px;text-align:right;top:582px;color:#000">65,536</div>
<div class="t" style="left:1429px;top:582px;color:#000">true</div>
<div class="t" style="left:1489px;top:582px;color:#000">Programs and Libraries</div>
<div class="t" style="left:1639px;top:582px;color:#000">03/13/2015 13:54:30 UTC</div>
<div class="t" style="left:1794px;top:582px;color:#000">03/13/2015 13:54:30 UTC</div>
<div class="t" style="left:1948px;top:582px;width:17px;overflow:hidden;color:#000">03/</div>
<div class="t" style="left:477px;top:598px;color:#000">287,427</div>
<div style="left:529px;top:598px;width:14px;height:14px;border:1px solid #70757d;border-radius:3px;background:linear-gradient(#fdfdfd,#dfe2e6)"></div>
<div style="left:547px;top:599px;width:46px;height:12px;border:1px solid #9ea2a8;background:linear-gradient(#f2f3f4,#d8dbdf 50%,#cdd0d5 55%,#e4e6e9);text-align:center;line-height:12px;font-size:12px">1%</div>
<svg style="position:absolute;left:700px;top:597px" width="16" height="16" viewBox="0 0 16 16"><path d="M1.5 0.5 H9.5 L14.5 5.5 V15.5 H1.5 Z" fill="#e3eaf2" stroke="#8a9099"/><path d="M9.5 0.5 V5.5 H14.5" fill="#f4f6f9" stroke="#8a9099"/></svg>
<div class="t" style="left:720px;top:598px;color:#000">new_year_calendar.one</div>
<div class="t" style="left:900px;top:598px;color:#000">2015-01-12T16:23:42Z</div>
<div class="t" style="left:1055px;top:598px;color:#000">modified</div>
<div class="t" style="left:1229px;top:598px;color:#000">one</div>
<div class="t" style="left:1279px;top:598px;color:#000">onet...</div>
<div class="t" style="left:1219px;width:200px;text-align:right;top:598px;color:#000">0</div>
<div class="t" style="left:1429px;top:598px;color:#000">true</div>
<div class="t" style="left:1489px;top:598px;color:#000">Empty Files | Other Doc...</div>
<div class="t" style="left:1794px;top:598px;color:#000">01/12/2015 16:23:42 UTC</div>
<div style="left:472px;top:613px;width:55px;height:16px;background:#f2f2f2"></div>
<div style="left:595px;top:613px;width:1370px;height:16px;background:#f2f2f2"></div>
<div class="t" style="left:477px;top:614px;color:#000">287,428</div>
<div style="left:529px;top:614px;width:14px;height:14px;border:1px solid #70757d;border-radius:3px;background:linear-gradient(#fdfdfd,#dfe2e6)"></div>
<div style="left:547px;top:615px;width:46px;height:12px;border:1px solid #9ea2a8;background:linear-gradient(#f2f3f4,#d8dbdf 50%,#cdd0d5 55%,#e4e6e9);text-align:center;line-height:12px;font-size:12px">1%</div>
<svg style="position:absolute;left:702px;top:613px" width="15" height="16" viewBox="0 0 15 16"><path d="M1.5 0.5 H9.5 L13.5 4.5 V15.5 H1.5 Z" fill="#eef3fa" stroke="#7a8aa6"/><path d="M3.5 5.5H11M3.5 7.5H11M3.5 9.5H11M3.5 11.5H11M3.5 13.5H11" stroke="#6f8fc0"/></svg>
<div class="t" style="left:720px;top:614px;color:#000">diary_#2p.txt</div>
<div class="t" style="left:900px;top:614px;color:#000">2015-01-12T17:20:26Z</div>
<div class="t" style="left:1055px;top:614px;color:#000">modified</div>
<div class="t" style="left:1229px;top:614px;color:#000">txt</div>
<div class="t" style="left:1279px;top:614px;color:#000">txt</div>
<div class="t" style="left:1219px;width:200px;text-align:right;top:614px;color:#000">0</div>
<div class="t" style="left:1429px;top:614px;color:#000">true</div>
<div class="t" style="left:1489px;top:614px;color:#000">Empty Files | Other files</div>
<div class="t" style="left:1794px;top:614px;color:#000">01/12/2015 17:20:26 UTC</div>
<div style="left:1965px;top:117px;width:15px;height:504px;background:linear-gradient(90deg,#5d6168,#a4a8ae 10%,#c6c9ce 35%,#d3d6db 60%,#d6d9df);border-right:1px solid #8d9299"></div>
<svg style="position:absolute;left:1965px;top:117px" width="14" height="26" viewBox="0 0 14 26"><defs><linearGradient id="cg5" x1="0" y1="0" x2="1" y2="0"><stop offset="0" stop-color="#e2e4e7"/><stop offset="0.45" stop-color="#f7f8f9"/><stop offset="1" stop-color="#dadde1"/></linearGradient><linearGradient id="cg5s" x1="0" y1="0" x2="0" y2="1"><stop offset="0" stop-color="#5a5e64" stop-opacity="0"/><stop offset="1" stop-color="#303338" stop-opacity="0.9"/></linearGradient></defs><g transform="matrix(1,0,0,-1,0,26)"><path d="M0 4 Q8 5 13 0 V2 Q8 10 0 10 Z" fill="url(#cg5s)"/><path d="M0 26 V10 Q8 10 13 2 V26 Z" fill="url(#cg5)"/><path d="M3.0 14.5 H11.0 L7.0 21.5 Z" fill="#3c3c3c"/></g></svg>
<svg style="position:absolute;left:1965px;top:595px" width="14" height="26" viewBox="0 0 14 26"><defs><linearGradient id="cg6" x1="0" y1="0" x2="1" y2="0"><stop offset="0" stop-color="#e2e4e7"/><stop offset="0.45" stop-color="#f7f8f9"/><stop offset="1" stop-color="#dadde1"/></linearGradient><linearGradient id="cg6s" x1="0" y1="0" x2="0" y2="1"><stop offset="0" stop-color="#5a5e64" stop-opacity="0"/><stop offset="1" stop-color="#303338" stop-opacity="0.9"/></linearGradient></defs><g transform="matrix(1,0,0,1,0,0)"><path d="M0 4 Q8 5 13 0 V2 Q8 10 0 10 Z" fill="url(#cg6s)"/><path d="M0 26 V10 Q8 10 13 2 V26 Z" fill="url(#cg6)"/><path d="M3.0 14.5 H11.0 L7.0 21.5 Z" fill="#3c3c3c"/></g></svg>
<div style="left:1965px;top:393px;width:14px;height:28px;border:1px solid #2e3c4a;border-left:none;border-radius:0 8px 8px 0 / 0 14px 14px 0;background:linear-gradient(90deg,#e9eef3,#ffffff 14%,#c9d9e7 30%,#b6cbdd 55%,#cfe3f1 80%,#e6f5fd)"></div>
<div style="left:472px;top:621px;width:1493px;height:16px;background:linear-gradient(#5d6168,#a4a8ae 10%,#c6c9ce 35%,#d3d6db 60%,#d6d9df);border-bottom:1px solid #8d9299"></div>
<svg style="position:absolute;left:472px;top:621px" width="26" height="15" viewBox="0 0 26 15"><defs><linearGradient id="cg7" x1="0" y1="0" x2="1" y2="0"><stop offset="0" stop-color="#e2e4e7"/><stop offset="0.45" stop-color="#f7f8f9"/><stop offset="1" stop-color="#dadde1"/></linearGradient><linearGradient id="cg7s" x1="0" y1="0" x2="0" y2="1"><stop offset="0" stop-color="#5a5e64" stop-opacity="0"/><stop offset="1" stop-color="#303338" stop-opacity="0.9"/></linearGradient></defs><g transform="matrix(0,1,-1,0,26,0)"><path d="M0 4 Q9 5 14 0 V2 Q9 10 0 10 Z" fill="url(#cg7s)"/><path d="M0 26 V10 Q9 10 14 2 V26 Z" fill="url(#cg7)"/><path d="M3.5 14.5 H11.5 L7.5 21.5 Z" fill="#3c3c3c"/></g></svg>
<svg style="position:absolute;left:1939px;top:621px" width="26" height="15" viewBox="0 0 26 15"><defs><linearGradient id="cg8" x1="0" y1="0" x2="1" y2="0"><stop offset="0" stop-color="#e2e4e7"/><stop offset="0.45" stop-color="#f7f8f9"/><stop offset="1" stop-color="#dadde1"/></linearGradient><linearGradient id="cg8s" x1="0" y1="0" x2="0" y2="1"><stop offset="0" stop-color="#5a5e64" stop-opacity="0"/><stop offset="1" stop-color="#303338" stop-opacity="0.9"/></linearGradient></defs><g transform="matrix(0,1,1,0,0,0)"><path d="M0 4 Q9 5 14 0 V2 Q9 10 0 10 Z" fill="url(#cg8s)"/><path d="M0 26 V10 Q9 10 14 2 V26 Z" fill="url(#cg8)"/><path d="M3.5 14.5 H11.5 L7.5 21.5 Z" fill="#3c3c3c"/></g></svg>
<div style="left:489px;top:621px;width:86px;height:15px;border:1px solid #2e3c4a;border-top:none;border-radius:0 0 16px 16px / 0 0 14px 14px;background:linear-gradient(#e9eef3,#ffffff 14%,#c9d9e7 30%,#b6cbdd 55%,#cfe3f1 80%,#e6f5fd)"></div>
<div style="left:1965px;top:621px;width:16px;height:16px;background:#d6d9df"></div>
<div style="left:466px;top:646px;width:593px;height:25px;border:1px solid #5f636b;border-bottom:none;border-radius:5px 5px 0 0;background:#d6d9df"></div>
<div style="left:466px;top:646px;width:56px;height:25px;border-right:1px solid #5f636b;border-top:1px solid #5f636b;border-radius:5px 0 0 0;"></div>
<div style="left:521px;top:646px;width:117px;height:25px;border-right:1px solid #5f636b;border-left:1px solid #5f636b;border-top:1px solid #5f636b;"></div>
<div style="left:637px;top:646px;width:99px;height:25px;border-right:1px solid #5f636b;border-left:1px solid #5f636b;border-top:1px solid #5f636b;background:linear-gradient(#2f62a0,#4f86c0 50%,#3f76b2);"></div>
<div style="left:735px;top:646px;width:79px;height:25px;border-right:1px solid #5f636b;border-left:1px solid #5f636b;border-top:1px solid #5f636b;"></div>
<div style="left:813px;top:646px;width:84px;height:25px;border-right:1px solid #5f636b;border-left:1px solid #5f636b;border-top:1px solid #5f636b;"></div>
<div style="left:896px;top:646px;width:97px;height:25px;border-right:1px solid #5f636b;border-left:1px solid #5f636b;border-top:1px solid #5f636b;"></div>
<div style="left:466px;top:670px;width:171px;height:1px;background:#5f636b"></div>
<div style="left:735px;top:670px;width:324px;height:1px;background:#5f636b"></div>
<div style="left:466px;top:670px;width:593px;height:456px;border:1px solid #5f636b;border-top:none;"></div>
<div class="t" style="left:466px;top:652px;width:56px;text-align:center;color:#000">No hits</div>
<div class="t" style="left:521px;top:652px;width:117px;text-align:center;color:#000">Attachs/Subitems</div>
<svg style="position:absolute;left:644px;top:653px" width="11" height="13" viewBox="0 0 11 13"><path d="M3 0.5 H10.5 V12.5 H0.5 V3 Z" fill="#fff" stroke="#555" stroke-width="0.8"/></svg>
<div class="t" style="left:664px;top:652px;color:#fff">Parent Item</div>
<div class="t" style="left:735px;top:652px;width:79px;text-align:center;color:#000">Duplicates</div>
<div class="t" style="left:813px;top:652px;width:84px;text-align:center;color:#000">Referencing</div>
<div class="t" style="left:896px;top:652px;width:97px;text-align:center;color:#000">Referenced By</div>
<svg style="position:absolute;left:1003px;top:651px" width="52" height="16" viewBox="0 0 52 16"><rect x="1" y="11" width="8" height="2.2" fill="#000"/><rect x="18.8" y="7.2" width="8.6" height="7" fill="none" stroke="#000" stroke-width="1.6"/><rect x="18" y="6.4" width="10.2" height="3" fill="#000"/><path d="M26 7.5 Q26.5 4.6 29.5 4.6 H30" stroke="#000" stroke-width="1.6" fill="none"/><path d="M29 1.8 L32.2 4.6 L29 7.4 Z" fill="#000"/><rect x="39.8" y="5.8" width="10.4" height="7.5" fill="none" stroke="#000" stroke-width="1.6"/><rect x="39" y="5" width="12" height="3" fill="#000"/></svg>
<div style="left:467px;top:671px;width:591px;height:454px;border:2px solid #39698a;border-top-width:2px"></div>
<div style="left:471px;top:675px;width:583px;height:446px;border:1px solid #9da2aa;background:#fff"></div>
<div class="t" style="left:477px;top:677px">1</div>
<div style="left:515px;top:677px;width:14px;height:14px;border:1px solid #70757d;border-radius:3px;background:linear-gradient(#fdfdfd,#dfe2e6)"></div>
<svg style="position:absolute;left:538px;top:676px" width="16" height="16" viewBox="0 0 16 16"><path d="M1.5 0.5 H9.5 L14.5 5.5 V15.5 H1.5 Z" fill="#e3eaf2" stroke="#8a9099"/><path d="M9.5 0.5 V5.5 H14.5" fill="#f4f6f9" stroke="#8a9099"/></svg>
<div class="t" style="left:557px;top:677px;font-size:12.6px">Unalloc_211630_106061824_14444470272</div>
<div style="left:472px;top:1105px;width:581px;height:15px;background:linear-gradient(#5d6168,#a4a8ae 10%,#c6c9ce 35%,#d3d6db 60%,#d6d9df);border-bottom:1px solid #8d9299"></div>
<svg style="position:absolute;left:472px;top:1105px" width="26" height="14" viewBox="0 0 26 14"><defs><linearGradient id="cg9" x1="0" y1="0" x2="1" y2="0"><stop offset="0" stop-color="#e2e4e7"/><stop offset="0.45" stop-color="#f7f8f9"/><stop offset="1" stop-color="#dadde1"/></linearGradient><linearGradient id="cg9s" x1="0" y1="0" x2="0" y2="1"><stop offset="0" stop-color="#5a5e64" stop-opacity="0"/><stop offset="1" stop-color="#303338" stop-opacity="0.9"/></linearGradient></defs><g transform="matrix(0,1,-1,0,26,0)"><path d="M0 4 Q8 5 13 0 V2 Q8 10 0 10 Z" fill="url(#cg9s)"/><path d="M0 26 V10 Q8 10 13 2 V26 Z" fill="url(#cg9)"/><path d="M3.0 14.5 H11.0 L7.0 21.5 Z" fill="#3c3c3c"/></g></svg>
<svg style="position:absolute;left:1027px;top:1105px" width="26" height="14" viewBox="0 0 26 14"><defs><linearGradient id="cg10" x1="0" y1="0" x2="1" y2="0"><stop offset="0" stop-color="#e2e4e7"/><stop offset="0.45" stop-color="#f7f8f9"/><stop offset="1" stop-color="#dadde1"/></linearGradient><linearGradient id="cg10s" x1="0" y1="0" x2="0" y2="1"><stop offset="0" stop-color="#5a5e64" stop-opacity="0"/><stop offset="1" stop-color="#303338" stop-opacity="0.9"/></linearGradient></defs><g transform="matrix(0,1,1,0,0,0)"><path d="M0 4 Q8 5 13 0 V2 Q8 10 0 10 Z" fill="url(#cg10s)"/><path d="M0 26 V10 Q8 10 13 2 V26 Z" fill="url(#cg10)"/><path d="M3.0 14.5 H11.0 L7.0 21.5 Z" fill="#3c3c3c"/></g></svg>
<div style="left:489px;top:1105px;width:76px;height:14px;border:1px solid #2e3c4a;border-top:none;border-radius:0 0 15px 15px / 0 0 13px 13px;background:linear-gradient(#e9eef3,#ffffff 14%,#c9d9e7 30%,#b6cbdd 55%,#cfe3f1 80%,#e6f5fd)"></div>
<div style="left:1063px;top:646px;width:923px;height:25px;border:1px solid #5f636b;border-bottom:none;border-radius:5px 5px 0 0;background:#d6d9df"></div>
<div style="left:1063px;top:646px;width:38px;height:25px;border-right:1px solid #5f636b;border-top:1px solid #5f636b;border-radius:5px 0 0 0;"></div>
<div style="left:1100px;top:646px;width:39px;height:25px;border-right:1px solid #5f636b;border-left:1px solid #5f636b;border-top:1px solid #5f636b;"></div>
<div style="left:1138px;top:646px;width:69px;height:25px;border-right:1px solid #5f636b;border-left:1px solid #5f636b;border-top:1px solid #5f636b;"></div>
<div style="left:1206px;top:646px;width:78px;height:25px;border-right:1px solid #5f636b;border-left:1px solid #5f636b;border-top:1px solid #5f636b;background:linear-gradient(#b3b6bc,#c9ccd2 60%,#d6d9df);"></div>
<div style="left:1063px;top:670px;width:143px;height:1px;background:#5f636b"></div>
<div style="left:1283px;top:670px;width:703px;height:1px;background:#5f636b"></div>
<div style="left:1063px;top:670px;width:923px;height:456px;border:1px solid #5f636b;border-top:none;"></div>
<div class="t" style="left:1063px;top:652px;width:38px;text-align:center;color:#000">Hex</div>
<div class="t" style="left:1100px;top:652px;width:39px;text-align:center;color:#000">Text</div>
<div class="t" style="left:1138px;top:652px;width:69px;text-align:center;color:#000">Metadata</div>
<svg style="position:absolute;left:1213px;top:653px" width="11" height="13" viewBox="0 0 11 13"><path d="M3 0.5 H10.5 V12.5 H0.5 V3 Z" fill="#fff" stroke="#555" stroke-width="0.8"/></svg>
<div class="t" style="left:1233px;top:652px;color:#000">Preview</div>
<svg style="position:absolute;left:1843px;top:651px" width="80" height="16" viewBox="0 0 80 16"><path d="M2 8 L8 3 V6 H17 V10 H8 V13 Z" fill="#a9adb3"/><path d="M37 8 L31 3 V6 H22 V10 H31 V13 Z" fill="#a9adb3"/><path d="M44 15 L50 9" stroke="#111" stroke-width="1.3"/><path d="M47 6 L53 12 L55 10 L54 8 L58 4 L59 5 L60 4 L54 -2 L53 -1 L54 0 L50 4 L48 3 Z" fill="#111"/><path d="M65 6.5 L70 11.5 L75 6.5" stroke="#9da1a7" stroke-width="2" fill="none"/></svg>
<div style="left:1925px;top:650px;width:1px;height:19px;background:#b4b8be"></div>
<svg style="position:absolute;left:1930px;top:651px" width="52" height="16" viewBox="0 0 52 16"><rect x="1" y="11" width="8" height="2.2" fill="#000"/><rect x="18.8" y="7.2" width="8.6" height="7" fill="none" stroke="#000" stroke-width="1.6"/><rect x="18" y="6.4" width="10.2" height="3" fill="#000"/><path d="M26 7.5 Q26.5 4.6 29.5 4.6 H30" stroke="#000" stroke-width="1.6" fill="none"/><path d="M29 1.8 L32.2 4.6 L29 7.4 Z" fill="#000"/><rect x="39.8" y="5.8" width="10.4" height="7.5" fill="none" stroke="#000" stroke-width="1.6"/><rect x="39" y="5" width="12" height="3" fill="#000"/></svg>
<div style="left:1064px;top:671px;width:921px;height:454px;background:#d6d9df"></div>
<div style="left:1064px;top:678px;width:872px;height:27px;background:#f0f0f0"></div>
<div style="left:1066px;top:679px;width:126px;height:24px;background:#fff;border:1px solid #a0a0a0"></div>
<div class="t" style="left:1070px;top:683px;font-size:12px">W1</div>
<div style="left:1173px;top:681px;width:17px;height:20px;background:#e5e5e5;border:1px solid #b0b0b0"></div>
<svg style="position:absolute;left:1175px;top:686px" width="12" height="10"><path d="M2 3 L6 7 L10 3" stroke="#555" stroke-width="1.2" fill="none"/></svg>
<div style="left:1195px;top:684px;width:1px;height:15px;background:#a8a8a8"></div>
<div style="left:1278px;top:684px;width:1px;height:15px;background:#a8a8a8"></div>
<svg style="position:absolute;left:1201px;top:682px" width="22" height="18" viewBox="0 0 22 18"><path d="M4 16 V5 Q4 2 7.5 2 H9.5 M1.5 7.5 H8" stroke="#555" stroke-width="2.6" fill="none"/><path d="M11 9 L18.5 16.5 M18.5 9 L11 16.5" stroke="#555" stroke-width="2.4"/></svg>
<svg style="position:absolute;left:1230px;top:683px" width="14" height="16" viewBox="0 0 14 16"><path d="M12.5 4 V1.5 H2 L7.5 8 L2 14.5 H12.5 V12" stroke="#555" stroke-width="2.4" fill="none" stroke-linejoin="miter"/></svg>
<div style="left:1257px;top:687px;width:11px;height:2.5px;background:#555"></div><div style="left:1257px;top:693px;width:11px;height:2.5px;background:#555"></div>
<div style="left:1283px;top:679px;width:626px;height:24px;background:#fff;border:1px solid #a0a0a0"></div>
<div style="left:1913px;top:681px;width:18px;height:20px;background:#e5e5e5;border:1px solid #b8b8b8"></div>
<div style="left:1917px;top:688px;width:0;height:0;border-left:5px solid transparent;border-right:5px solid transparent;border-top:6px solid #111"></div>
<div style="left:1066px;top:705px;width:870px;height:1px;background:#cbb8a8"></div>
<div style="left:1066px;top:706px;width:870px;height:40px;background:#bee3f5;border-bottom:2px solid #1d4c96"></div>
<svg style="position:absolute;left:1070px;top:710px" width="32" height="32" viewBox="0 0 32 32"><defs><radialGradient id="ig" cx="40%" cy="30%" r="70%"><stop offset="0" stop-color="#6ea3d8"/><stop offset="1" stop-color="#1f5a9a"/></radialGradient></defs><circle cx="16" cy="16" r="15" fill="url(#ig)"/><circle cx="18.5" cy="8" r="2" fill="#fff"/><path d="M14 12.5 H18.5 L15.5 24 H18 L17.5 25.5 H12 L15 14 H13.5 Z" fill="#fff"/></svg>
<div class="t" style="left:1108px;top:719px;font-size:11.95px;color:#111">This document is open in read-only mode.</div>
<div style="left:1795px;top:713px;width:98px;height:28px;background:#e1e1e1;border:1px solid #adadad;text-align:center;line-height:26px;font-size:12.4px;color:#111">Edit Document</div>
<svg style="position:absolute;left:1909px;top:719px" width="14" height="14"><path d="M2 2 L12 12 M12 2 L2 12" stroke="#1d4c96" stroke-width="2.3"/></svg>
<div style="left:1066px;top:746px;width:853px;height:342px;background:#fff;overflow:hidden"></div>
<svg style="position:absolute;left:1066px;top:746px" width="853" height="342" viewBox="1066 746 853 342" shape-rendering="crispEdges"><line x1="1066" y1="780.5" x2="1919" y2="780.5" stroke="#d4d4d4"/><line x1="1066" y1="793.5" x2="1919" y2="793.5" stroke="#d4d4d4"/><line x1="1066" y1="806.5" x2="1919" y2="806.5" stroke="#d4d4d4"/><line x1="1066" y1="819.5" x2="1919" y2="819.5" stroke="#d4d4d4"/><line x1="1066" y1="832.5" x2="1919" y2="832.5" stroke="#d4d4d4"/><line x1="1066" y1="845.5" x2="1919" y2="845.5" stroke="#d4d4d4"/><line x1="1066" y1="858.5" x2="1919" y2="858.5" stroke="#d4d4d4"/><line x1="1066" y1="871.5" x2="1919" y2="871.5" stroke="#d4d4d4"/><line x1="1066" y1="884.5" x2="1919" y2="884.5" stroke="#d4d4d4"/><line x1="1066" y1="897.5" x2="1919" y2="897.5" stroke="#d4d4d4"/><line x1="1066" y1="910.5" x2="1919" y2="910.5" stroke="#d4d4d4"/><line x1="1066" y1="923.5" x2="1919" y2="923.5" stroke="#d4d4d4"/><line x1="1066" y1="936.5" x2="1919" y2="936.5" stroke="#d4d4d4"/><line x1="1066" y1="949.5" x2="1919" y2="949.5" stroke="#d4d4d4"/><line x1="1066" y1="962.5" x2="1919" y2="962.5" stroke="#d4d4d4"/><line x1="1066" y1="975.5" x2="1919" y2="975.5" stroke="#d4d4d4"/><line x1="1066" y1="988.5" x2="1919" y2="988.5" stroke="#d4d4d4"/><line x1="1066" y1="1001.5" x2="1919" y2="1001.5" stroke="#d4d4d4"/><line x1="1066" y1="1014.5" x2="1919" y2="1014.5" stroke="#d4d4d4"/><line x1="1066" y1="1027.5" x2="1919" y2="1027.5" stroke="#d4d4d4"/><line x1="1066" y1="1040.5" x2="1919" y2="1040.5" stroke="#d4d4d4"/><line x1="1066" y1="1053.5" x2="1919" y2="1053.5" stroke="#d4d4d4"/><line x1="1066" y1="1066.5" x2="1919" y2="1066.5" stroke="#d4d4d4"/><line x1="1066" y1="1079.5" x2="1919" y2="1079.5" stroke="#d4d4d4"/><line x1="1066" y1="1092.5" x2="1919" y2="1092.5" stroke="#d4d4d4"/><line x1="1122.5" y1="764" x2="1122.5" y2="1088" stroke="#d4d4d4"/><line x1="1156.5" y1="764" x2="1156.5" y2="1088" stroke="#d4d4d4"/><line x1="1194.5" y1="764" x2="1194.5" y2="1088" stroke="#d4d4d4"/><line x1="1224.5" y1="764" x2="1224.5" y2="1088" stroke="#d4d4d4"/><line x1="1254.5" y1="764" x2="1254.5" y2="1088" stroke="#d4d4d4"/><line x1="1284.5" y1="764" x2="1284.5" y2="1088" stroke="#d4d4d4"/><line x1="1314.5" y1="764" x2="1314.5" y2="1088" stroke="#d4d4d4"/><line x1="1344.5" y1="764" x2="1344.5" y2="1088" stroke="#d4d4d4"/><line x1="1374.5" y1="764" x2="1374.5" y2="1088" stroke="#d4d4d4"/><line x1="1404.5" y1="764" x2="1404.5" y2="1088" stroke="#d4d4d4"/><line x1="1434.5" y1="764" x2="1434.5" y2="1088" stroke="#d4d4d4"/><line x1="1444.5" y1="764" x2="1444.5" y2="1088" stroke="#d4d4d4"/><line x1="1468.5" y1="764" x2="1468.5" y2="1088" stroke="#d4d4d4"/><line x1="1502.5" y1="764" x2="1502.5" y2="1088" stroke="#d4d4d4"/><line x1="1540.5" y1="764" x2="1540.5" y2="1088" stroke="#d4d4d4"/><line x1="1570.5" y1="764" x2="1570.5" y2="1088" stroke="#d4d4d4"/><line x1="1600.5" y1="764" x2="1600.5" y2="1088" stroke="#d4d4d4"/><line x1="1630.5" y1="764" x2="1630.5" y2="1088" stroke="#d4d4d4"/><line x1="1660.5" y1="764" x2="1660.5" y2="1088" stroke="#d4d4d4"/><line x1="1690.5" y1="764" x2="1690.5" y2="1088" stroke="#d4d4d4"/><line x1="1723.5" y1="764" x2="1723.5" y2="1088" stroke="#d4d4d4"/><line x1="1753.5" y1="764" x2="1753.5" y2="1088" stroke="#d4d4d4"/><line x1="1783.5" y1="764" x2="1783.5" y2="1088" stroke="#d4d4d4"/><line x1="1828.5" y1="764" x2="1828.5" y2="1088" stroke="#d4d4d4"/><line x1="1877.5" y1="764" x2="1877.5" y2="1088" stroke="#d4d4d4"/><line x1="1919.5" y1="764" x2="1919.5" y2="1088" stroke="#d4d4d4"/><rect x="1066" y="746" width="853" height="18" fill="#f3f3f3"/><rect x="1066" y="746" width="32" height="342" fill="#f3f3f3"/><rect x="1753" y="746" width="30" height="18" fill="#4f93d8"/><rect x="1066" y="764" width="32" height="16" fill="#4f93d8"/><line x1="1098.5" y1="746" x2="1098.5" y2="764" stroke="#8a8a8a"/><line x1="1122.5" y1="746" x2="1122.5" y2="764" stroke="#8a8a8a"/><line x1="1156.5" y1="746" x2="1156.5" y2="764" stroke="#8a8a8a"/><line x1="1194.5" y1="746" x2="1194.5" y2="764" stroke="#8a8a8a"/><line x1="1224.5" y1="746" x2="1224.5" y2="764" stroke="#8a8a8a"/><line x1="1254.5" y1="746" x2="1254.5" y2="764" stroke="#8a8a8a"/><line x1="1284.5" y1="746" x2="1284.5" y2="764" stroke="#8a8a8a"/><line x1="1314.5" y1="746" x2="1314.5" y2="764" stroke="#8a8a8a"/><line x1="1344.5" y1="746" x2="1344.5" y2="764" stroke="#8a8a8a"/><line x1="1374.5" y1="746" x2="1374.5" y2="764" stroke="#8a8a8a"/><line x1="1404.5" y1="746" x2="1404.5" y2="764" stroke="#8a8a8a"/><line x1="1434.5" y1="746" x2="1434.5" y2="764" stroke="#8a8a8a"/><line x1="1444.5" y1="746" x2="1444.5" y2="764" stroke="#8a8a8a"/><line x1="1468.5" y1="746" x2="1468.5" y2="764" stroke="#8a8a8a"/><line x1="1502.5" y1="746" x2="1502.5" y2="764" stroke="#8a8a8a"/><line x1="1540.5" y1="746" x2="1540.5" y2="764" stroke="#8a8a8a"/><line x1="1570.5" y1="746" x2="1570.5" y2="764" stroke="#8a8a8a"/><line x1="1600.5" y1="746" x2="1600.5" y2="764" stroke="#8a8a8a"/><line x1="1630.5" y1="746" x2="1630.5" y2="764" stroke="#8a8a8a"/><line x1="1660.5" y1="746" x2="1660.5" y2="764" stroke="#8a8a8a"/><line x1="1690.5" y1="746" x2="1690.5" y2="764" stroke="#8a8a8a"/><line x1="1723.5" y1="746" x2="1723.5" y2="764" stroke="#8a8a8a"/><line x1="1753.5" y1="746" x2="1753.5" y2="764" stroke="#8a8a8a"/><line x1="1783.5" y1="746" x2="1783.5" y2="764" stroke="#8a8a8a"/><line x1="1828.5" y1="746" x2="1828.5" y2="764" stroke="#8a8a8a"/><line x1="1877.5" y1="746" x2="1877.5" y2="764" stroke="#8a8a8a"/><line x1="1919.5" y1="746" x2="1919.5" y2="764" stroke="#8a8a8a"/><line x1="1066" y1="764.5" x2="1919" y2="764.5" stroke="#6a6a6a"/><line x1="1098.5" y1="746" x2="1098.5" y2="1088" stroke="#6a6a6a"/><line x1="1066" y1="780.5" x2="1098" y2="780.5" stroke="#6a6a6a"/><line x1="1066" y1="793.5" x2="1098" y2="793.5" stroke="#6a6a6a"/><line x1="1066" y1="806.5" x2="1098" y2="806.5" stroke="#6a6a6a"/><line x1="1066" y1="819.5" x2="1098" y2="819.5" stroke="#6a6a6a"/><line x1="1066" y1="832.5" x2="1098" y2="832.5" stroke="#6a6a6a"/><line x1="1066" y1="845.5" x2="1098" y2="845.5" stroke="#6a6a6a"/><line x1="1066" y1="858.5" x2="1098" y2="858.5" stroke="#6a6a6a"/><line x1="1066" y1="871.5" x2="1098" y2="871.5" stroke="#6a6a6a"/><line x1="1066" y1="884.5" x2="1098" y2="884.5" stroke="#6a6a6a"/><line x1="1066" y1="897.5" x2="1098" y2="897.5" stroke="#6a6a6a"/><line x1="1066" y1="910.5" x2="1098" y2="910.5" stroke="#6a6a6a"/><line x1="1066" y1="923.5" x2="1098" y2="923.5" stroke="#6a6a6a"/><line x1="1066" y1="936.5" x2="1098" y2="936.5" stroke="#6a6a6a"/><line x1="1066" y1="949.5" x2="1098" y2="949.5" stroke="#6a6a6a"/><line x1="1066" y1="962.5" x2="1098" y2="962.5" stroke="#6a6a6a"/><line x1="1066" y1="975.5" x2="1098" y2="975.5" stroke="#6a6a6a"/><line x1="1066" y1="988.5" x2="1098" y2="988.5" stroke="#6a6a6a"/><line x1="1066" y1="1001.5" x2="1098" y2="1001.5" stroke="#6a6a6a"/><line x1="1066" y1="1014.5" x2="1098" y2="1014.5" stroke="#6a6a6a"/><line x1="1066" y1="1027.5" x2="1098" y2="1027.5" stroke="#6a6a6a"/><line x1="1066" y1="1040.5" x2="1098" y2="1040.5" stroke="#6a6a6a"/><line x1="1066" y1="1053.5" x2="1098" y2="1053.5" stroke="#6a6a6a"/><line x1="1066" y1="1066.5" x2="1098" y2="1066.5" stroke="#6a6a6a"/><line x1="1066" y1="1079.5" x2="1098" y2="1079.5" stroke="#6a6a6a"/><line x1="1066" y1="1092.5" x2="1098" y2="1092.5" stroke="#6a6a6a"/></svg>
<div class="t" style="left:1099px;top:748px;width:24px;text-align:center;font-size:12.5px;color:#222">A</div>
<div class="t" style="left:1123px;top:748px;width:34px;text-align:center;font-size:12.5px;color:#222">B</div>
<div class="t" style="left:1157px;top:748px;width:38px;text-align:center;font-size:12.5px;color:#222">C</div>
<div class="t" style="left:1195px;top:748px;width:30px;text-align:center;font-size:12.5px;color:#222">D</div>
<div class="t" style="left:1225px;top:748px;width:30px;text-align:center;font-size:12.5px;color:#222">E</div>
<div class="t" style="left:1255px;top:748px;width:30px;text-align:center;font-size:12.5px;color:#222">F</div>
<div class="t" style="left:1285px;top:748px;width:30px;text-align:center;font-size:12.5px;color:#222">G</div>
<div class="t" style="left:1315px;top:748px;width:30px;text-align:center;font-size:12.5px;color:#222">H</div>
<div class="t" style="left:1345px;top:748px;width:30px;text-align:center;font-size:12.5px;color:#222">I</div>
<div class="t" style="left:1375px;top:748px;width:30px;text-align:center;font-size:12.5px;color:#222">J</div>
<div class="t" style="left:1405px;top:748px;width:30px;text-align:center;font-size:12.5px;color:#222">K</div>
<div class="t" style="left:1435px;top:748px;width:10px;text-align:center;font-size:12.5px;color:#222">L</div>
<div class="t" style="left:1445px;top:748px;width:24px;text-align:center;font-size:12.5px;color:#222">M</div>
<div class="t" style="left:1469px;top:748px;width:34px;text-align:center;font-size:12.5px;color:#222">N</div>
<div class="t" style="left:1503px;top:748px;width:38px;text-align:center;font-size:12.5px;color:#222">O</div>
<div class="t" style="left:1541px;top:748px;width:30px;text-align:center;font-size:12.5px;color:#222">P</div>
<div class="t" style="left:1571px;top:748px;width:30px;text-align:center;font-size:12.5px;color:#222">Q</div>
<div class="t" style="left:1601px;top:748px;width:30px;text-align:center;font-size:12.5px;color:#222">R</div>
<div class="t" style="left:1631px;top:748px;width:30px;text-align:center;font-size:12.5px;color:#222">S</div>
<div class="t" style="left:1661px;top:748px;width:30px;text-align:center;font-size:12.5px;color:#222">T</div>
<div class="t" style="left:1691px;top:748px;width:33px;text-align:center;font-size:12.5px;color:#222">U</div>
<div class="t" style="left:1724px;top:748px;width:30px;text-align:center;font-size:12.5px;color:#222">V</div>
<div class="t" style="left:1754px;top:748px;width:30px;text-align:center;font-size:12.5px;color:#fff;font-weight:bold">W</div>
<div class="t" style="left:1784px;top:748px;width:45px;text-align:center;font-size:12.5px;color:#222">X</div>
<div class="t" style="left:1829px;top:748px;width:49px;text-align:center;font-size:12.5px;color:#222">Y</div>
<div class="t" style="left:1878px;top:748px;width:42px;text-align:center;font-size:12.5px;color:#222">Z</div>
<div style="left:1066px;top:765px;width:32px;height:14px;line-height:14px;text-align:center;font-size:12.5px;color:#fff;font-weight:bold">1</div>
<div style="left:1066px;top:782px;width:32px;height:14px;line-height:14px;text-align:center;font-size:12.5px;color:#222">2</div>
<div style="left:1066px;top:795px;width:32px;height:14px;line-height:14px;text-align:center;font-size:12.5px;color:#222">3</div>
<div style="left:1066px;top:808px;width:32px;height:14px;line-height:14px;text-align:center;font-size:12.5px;color:#222">4</div>
<div style="left:1066px;top:821px;width:32px;height:14px;line-height:14px;text-align:center;font-size:12.5px;color:#222">5</div>
<div style="left:1066px;top:834px;width:32px;height:14px;line-height:14px;text-align:center;font-size:12.5px;color:#222">6</div>
<div style="left:1066px;top:847px;width:32px;height:14px;line-height:14px;text-align:center;font-size:12.5px;color:#222">7</div>
<div style="left:1066px;top:860px;width:32px;height:14px;line-height:14px;text-align:center;font-size:12.5px;color:#222">8</div>
<div style="left:1066px;top:873px;width:32px;height:14px;line-height:14px;text-align:center;font-size:12.5px;color:#222">9</div>
<div style="left:1066px;top:886px;width:32px;height:14px;line-height:14px;text-align:center;font-size:12.5px;color:#222">10</div>
<div style="left:1066px;top:899px;width:32px;height:14px;line-height:14px;text-align:center;font-size:12.5px;color:#222">11</div>
<div style="left:1066px;top:912px;width:32px;height:14px;line-height:14px;text-align:center;font-size:12.5px;color:#222">12</div>
<div style="left:1066px;top:925px;width:32px;height:14px;line-height:14px;text-align:center;font-size:12.5px;color:#222">13</div>
<div style="left:1066px;top:938px;width:32px;height:14px;line-height:14px;text-align:center;font-size:12.5px;color:#222">14</div>
<div style="left:1066px;top:951px;width:32px;height:14px;line-height:14px;text-align:center;font-size:12.5px;color:#222">15</div>
<div style="left:1066px;top:964px;width:32px;height:14px;line-height:14px;text-align:center;font-size:12.5px;color:#222">16</div>
<div style="left:1066px;top:977px;width:32px;height:14px;line-height:14px;text-align:center;font-size:12.5px;color:#222">17</div>
<div style="left:1066px;top:990px;width:32px;height:14px;line-height:14px;text-align:center;font-size:12.5px;color:#222">18</div>
<div style="left:1066px;top:1003px;width:32px;height:14px;line-height:14px;text-align:center;font-size:12.5px;color:#222">19</div>
<div style="left:1066px;top:1016px;width:32px;height:14px;line-height:14px;text-align:center;font-size:12.5px;color:#222">20</div>
<div style="left:1066px;top:1029px;width:32px;height:14px;line-height:14px;text-align:center;font-size:12.5px;color:#222">21</div>
<div style="left:1066px;top:1042px;width:32px;height:14px;line-height:14px;text-align:center;font-size:12.5px;color:#222">22</div>
<div style="left:1066px;top:1055px;width:32px;height:14px;line-height:14px;text-align:center;font-size:12.5px;color:#222">23</div>
<div style="left:1066px;top:1068px;width:32px;height:14px;line-height:14px;text-align:center;font-size:12.5px;color:#222">24</div>
<div style="left:1066px;top:1081px;width:32px;height:14px;line-height:14px;text-align:center;font-size:12.5px;color:#222">25</div>
<div class="t" style="left:1101px;top:765px;font-weight:bold;font-style:italic;font-size:12px;color:#000">Statistical summary of reported data for standard reference sample N-83 (nutrient constituents)</div>
<div style="left:1753px;top:764px;width:31px;height:17px;border:2px solid #000"></div>
<div style="left:1781px;top:778px;width:5px;height:5px;background:#000"></div>
<div style="left:1759px;top:820px;height:14px;line-height:14px;font-size:9.5px;letter-spacing:-0.2px;white-space:pre">3 Fσ</div>
<div style="left:1762px;top:859px;height:14px;line-height:14px;font-size:9.5px;letter-spacing:-0.2px;white-space:pre">1.5 Fσ</div>
<div style="left:1762px;top:899px;height:14px;line-height:14px;font-size:9.5px;letter-spacing:-0.2px;white-space:pre">PV</div>
<div style="left:1757px;top:938px;height:14px;line-height:14px;font-size:9.5px;letter-spacing:-0.2px;white-space:pre">1.5 Fσ</div>
<div style="left:1756px;top:978px;height:14px;line-height:14px;font-size:9.5px;letter-spacing:-0.2px;white-space:pre">3 Fσ</div>
<svg style="position:absolute;left:1098px;top:793px" width="664" height="234" viewBox="1098 793 664 234"><rect x="1099" y="794" width="663" height="232" fill="#fff"/><rect x="1150" y="826" width="605" height="158" fill="#c0c0c0"/><path d="M1150 826.5 H1755 M1150 905.5 H1755" stroke="#000" stroke-width="1.5" stroke-dasharray="9 5" shape-rendering="crispEdges"/><path d="M1150 865.5 H1755 M1150 944.5 H1755" stroke="#404040" stroke-width="2" stroke-dasharray="9 5"/><path d="M1149.5 826 V984.5 H1755" stroke="#000" stroke-width="1.5" fill="none"/><path d="M1755.5 826 V984" stroke="#555" stroke-width="0.6" fill="none"/><text x="1145" y="829.5" font-size="10" font-family="Liberation Sans" text-anchor="end" letter-spacing="-0.4">0,267</text><text x="1145" y="868.5" font-size="10" font-family="Liberation Sans" text-anchor="end" letter-spacing="-0.4">0,243</text><text x="1145" y="908.5" font-size="10" font-family="Liberation Sans" text-anchor="end" letter-spacing="-0.4">0,220</text><text x="1145" y="947.5" font-size="10" font-family="Liberation Sans" text-anchor="end" letter-spacing="-0.4">0,197</text><text x="1145" y="987.5" font-size="10" font-family="Liberation Sans" text-anchor="end" letter-spacing="-0.4">0,173</text><text x="0" y="0" font-size="10" font-family="Liberation Sans" transform="translate(1116,864) rotate(-90)" letter-spacing="-0.3">Concentration</text><text x="1447" y="813" font-size="12" font-family="Liberation Sans" font-weight="bold" text-anchor="middle" letter-spacing="-0.25">N-83 AMMONIA as NITROGEN (NH3 as N) in mg/L</text><text x="1374" y="1013" font-size="9" font-family="Liberation Sans" font-weight="bold" text-anchor="middle" letter-spacing="-0.2">Analytical Method Code</text><polyline points="1189,986 1199.7,978.8 1209.6,973.5 1219.2,957.8 1229.5,956.3 1240,951.5 1249.8,947.7 1259.9,944.8 1270,939.3 1280,937.4 1289.9,936.2 1300.4,925.9 1310.3,924.2 1320.3,921.1 1330.4,917.3 1340.7,917.3 1350.7,917.3 1360.8,914.4 1370.7,914.4 1380.7,910.6 1391,907.9 1401,907.9 1411.1,905.4 1421.2,905.4 1431.5,905.4 1441.6,905.4 1451.9,905.4 1462,905.4 1472,899 1482,897.4 1492,897.4 1502,897.4 1512,895.3 1522,890.3 1532.5,888.6 1542.5,888.6 1552.6,888.6 1562.7,885.5 1572.7,880.6 1582.8,879 1592.9,875.6 1603,872.2 1613,872.2 1623,860.5 1633.6,855 1639.3,826" fill="none" stroke="#ffff00" stroke-width="1"/><path d="M1199.7 973.8 L1204.7 981.8 L1194.7 981.8 Z" fill="#ffff00"/><path d="M1209.6 968.5 L1214.6 976.5 L1204.6 976.5 Z" fill="#ffff00"/><path d="M1219.2 952.8 L1224.2 960.8 L1214.2 960.8 Z" fill="#ffff00"/><path d="M1229.5 951.3 L1234.5 959.3 L1224.5 959.3 Z" fill="#ffff00"/><path d="M1240 946.5 L1245 954.5 L1235 954.5 Z" fill="#ffff00"/><path d="M1249.8 942.7 L1254.8 950.7 L1244.8 950.7 Z" fill="#ffff00"/><path d="M1259.9 939.8 L1264.9 947.8 L1254.9 947.8 Z" fill="#ffff00"/><path d="M1270 934.3 L1275 942.3 L1265 942.3 Z" fill="#ffff00"/><path d="M1280 932.4 L1285 940.4 L1275 940.4 Z" fill="#ffff00"/><path d="M1289.9 931.2 L1294.9 939.2 L1284.9 939.2 Z" fill="#ffff00"/><path d="M1300.4 920.9 L1305.4 928.9 L1295.4 928.9 Z" fill="#ffff00"/><path d="M1310.3 919.2 L1315.3 927.2 L1305.3 927.2 Z" fill="#ffff00"/><path d="M1320.3 916.1 L1325.3 924.1 L1315.3 924.1 Z" fill="#ffff00"/><path d="M1330.4 912.3 L1335.4 920.3 L1325.4 920.3 Z" fill="#ffff00"/><path d="M1340.7 912.3 L1345.7 920.3 L1335.7 920.3 Z" fill="#ffff00"/><path d="M1350.7 912.3 L1355.7 920.3 L1345.7 920.3 Z" fill="#ffff00"/><path d="M1360.8 909.4 L1365.8 917.4 L1355.8 917.4 Z" fill="#ffff00"/><path d="M1370.7 909.4 L1375.7 917.4 L1365.7 917.4 Z" fill="#ffff00"/><path d="M1380.7 905.6 L1385.7 913.6 L1375.7 913.6 Z" fill="#ffff00"/><path d="M1391 902.9 L1396 910.9 L1386 910.9 Z" fill="#ffff00"/><path d="M1401 902.9 L1406 910.9 L1396 910.9 Z" fill="#ffff00"/><path d="M1411.1 900.4 L1416.1 908.4 L1406.1 908.4 Z" fill="#ffff00"/><path d="M1421.2 900.4 L1426.2 908.4 L1416.2 908.4 Z" fill="#ffff00"/><path d="M1431.5 900.4 L1436.5 908.4 L1426.5 908.4 Z" fill="#ffff00"/><path d="M1441.6 900.4 L1446.6 908.4 L1436.6 908.4 Z" fill="#ffff00"/><path d="M1451.9 900.4 L1456.9 908.4 L1446.9 908.4 Z" fill="#ffff00"/><path d="M1462 900.4 L1467 908.4 L1457 908.4 Z" fill="#ffff00"/><path d="M1472 894 L1477 902 L1467 902 Z" fill="#ffff00"/><path d="M1482 892.4 L1487 900.4 L1477 900.4 Z" fill="#ffff00"/><path d="M1492 892.4 L1497 900.4 L1487 900.4 Z" fill="#ffff00"/><path d="M1502 892.4 L1507 900.4 L1497 900.4 Z" fill="#ffff00"/><path d="M1512 890.3 L1517 898.3 L1507 898.3 Z" fill="#ffff00"/><path d="M1522 885.3 L1527 893.3 L1517 893.3 Z" fill="#ffff00"/><path d="M1532.5 883.6 L1537.5 891.6 L1527.5 891.6 Z" fill="#ffff00"/><path d="M1542.5 883.6 L1547.5 891.6 L1537.5 891.6 Z" fill="#ffff00"/><path d="M1552.6 883.6 L1557.6 891.6 L1547.6 891.6 Z" fill="#ffff00"/><path d="M1562.7 880.5 L1567.7 888.5 L1557.7 888.5 Z" fill="#ffff00"/><path d="M1572.7 875.6 L1577.7 883.6 L1567.7 883.6 Z" fill="#ffff00"/><path d="M1582.8 874 L1587.8 882 L1577.8 882 Z" fill="#ffff00"/><path d="M1592.9 870.6 L1597.9 878.6 L1587.9 878.6 Z" fill="#ffff00"/><path d="M1603 867.2 L1608 875.2 L1598 875.2 Z" fill="#ffff00"/><path d="M1613 867.2 L1618 875.2 L1608 875.2 Z" fill="#ffff00"/><path d="M1623 855.5 L1628 863.5 L1618 863.5 Z" fill="#ffff00"/><path d="M1633.6 850 L1638.6 858 L1628.6 858 Z" fill="#ffff00"/><path d="M1169.3 924.2 L1179.4 886.9" stroke="#ff33cc" stroke-width="1.2"/><rect x="1165.3" y="920.2" width="8" height="8" fill="#ff33cc"/><rect x="1175.4" y="882.9" width="8" height="8" fill="#ff33cc"/><path d="M1159.2 888 L1163 892 L1159.2 896 L1155.4 892 Z" fill="#000066"/><polyline points="1673.5,927.4 1684,904.4 1693.8,837.8" fill="none" stroke="#00e5ff" stroke-width="1.2"/><path d="M1669.5 923.4 L1677.5 931.4 M1677.5 923.4 L1669.5 931.4" stroke="#00e5ff" stroke-width="1.6"/><path d="M1680 900.4 L1688 908.4 M1688 900.4 L1680 908.4" stroke="#00e5ff" stroke-width="1.6"/><path d="M1689.8 833.8 L1697.8 841.8 M1697.8 833.8 L1689.8 841.8" stroke="#00e5ff" stroke-width="1.6"/><rect x="1453.5" y="999.5" width="210" height="17" fill="#c0c0c0" stroke="#000" stroke-width="1"/><path d="M1462 1008 H1490" stroke="#000066" stroke-width="1" stroke-dasharray="2 1"/><path d="M1476 1005 L1479 1008 L1476 1011 L1473 1008 Z" fill="#000066"/><text x="1494" y="1011.5" font-size="9.5" font-family="Liberation Sans">0</text><path d="M1510 1008 H1539" stroke="#ff33cc" stroke-width="1" stroke-dasharray="2 1"/><rect x="1521" y="1005" width="6" height="6" fill="#ff33cc"/><text x="1545" y="1011.5" font-size="9.5" font-family="Liberation Sans">7</text><path d="M1558 1008 H1588" stroke="#ffff00" stroke-width="1.3"/><path d="M1573 1004 L1577 1011 L1569 1011 Z" fill="#ffff00"/><text x="1591" y="1011.5" font-size="9.5" font-family="Liberation Sans">22</text><path d="M1611 1008 H1640" stroke="#00e5ff" stroke-width="1" stroke-dasharray="2 1"/><path d="M1622 1005 L1628 1011 M1628 1005 L1622 1011" stroke="#00e5ff" stroke-width="1.3"/><text x="1644" y="1011.5" font-size="9.5" font-family="Liberation Sans">40</text></svg>
<div style="left:1101px;top:1028px;height:13px;line-height:13px;font-size:10px;white-space:pre;font-weight:bold;letter-spacing:-0.6px;font-size:9.6px;">SUMMARY</div>
<div style="left:1357px;top:1028px;width:80px;height:13px;line-height:13px;text-align:center;font-size:10px;white-space:pre;font-weight:bold;letter-spacing:-0.6px;font-size:9.6px;">Methods</div>
<div style="left:1652px;top:1028px;width:80px;height:13px;line-height:13px;text-align:center;font-size:10px;white-space:pre;font-weight:bold;letter-spacing:-0.6px;font-size:9.6px;">Statistics</div>
<div style="left:1163px;top:1041px;width:60px;height:13px;line-height:13px;text-align:right;font-size:10px;white-space:pre;letter-spacing:-0.25px;font-size:9.8px;">0</div>
<div style="left:1193px;top:1041px;width:60px;height:13px;line-height:13px;text-align:right;font-size:10px;white-space:pre;letter-spacing:-0.25px;font-size:9.8px;">7</div>
<div style="left:1223px;top:1041px;width:60px;height:13px;line-height:13px;text-align:right;font-size:10px;white-space:pre;letter-spacing:-0.25px;font-size:9.8px;">22</div>
<div style="left:1253px;top:1041px;width:60px;height:13px;line-height:13px;text-align:right;font-size:10px;white-space:pre;letter-spacing:-0.25px;font-size:9.8px;">40</div>
<div style="left:1462px;top:1041px;width:90px;height:13px;line-height:13px;text-align:right;font-size:10px;white-space:pre;letter-spacing:-0.25px;font-size:9.8px;">Method Codes</div>
<div style="left:1132px;top:1054px;width:60px;height:13px;line-height:13px;text-align:right;font-size:10px;white-space:pre;letter-spacing:-0.25px;font-size:9.8px;">n =</div>
<div style="left:1163px;top:1054px;width:60px;height:13px;line-height:13px;text-align:right;font-size:10px;white-space:pre;letter-spacing:-0.25px;font-size:9.8px;">1</div>
<div style="left:1193px;top:1054px;width:60px;height:13px;line-height:13px;text-align:right;font-size:10px;white-space:pre;letter-spacing:-0.25px;font-size:9.8px;">2</div>
<div style="left:1223px;top:1054px;width:60px;height:13px;line-height:13px;text-align:right;font-size:10px;white-space:pre;letter-spacing:-0.25px;font-size:9.8px;">48</div>
<div style="left:1253px;top:1054px;width:60px;height:13px;line-height:13px;text-align:right;font-size:10px;white-space:pre;letter-spacing:-0.25px;font-size:9.8px;">3</div>
<div style="left:1446px;top:1054px;height:13px;line-height:13px;font-size:10px;white-space:pre;letter-spacing:-0.25px;font-size:9.8px;">00  Other</div>
<div style="left:1630px;top:1054px;width:60px;height:13px;line-height:13px;text-align:right;font-size:10px;white-space:pre;font-weight:bold;letter-spacing:-0.6px;font-size:9.6px;">MPV =</div>
<div style="left:1662px;top:1054px;width:60px;height:13px;line-height:13px;text-align:right;font-size:10px;white-space:pre;font-weight:bold;letter-spacing:-0.6px;font-size:9.6px;">0,220</div>
<div style="left:1725px;top:1054px;height:13px;line-height:13px;font-size:10px;white-space:pre;font-weight:bold;letter-spacing:-0.6px;font-size:9.6px;">mg/L</div>
<div style="left:1132px;top:1067px;width:60px;height:13px;line-height:13px;text-align:right;font-size:10px;white-space:pre;letter-spacing:-0.25px;font-size:9.8px;">Minimum =</div>
<div style="left:1163px;top:1067px;width:60px;height:13px;line-height:13px;text-align:right;font-size:10px;white-space:pre;letter-spacing:-0.25px;font-size:9.8px;">0,228</div>
<div style="left:1193px;top:1067px;width:60px;height:13px;line-height:13px;text-align:right;font-size:10px;white-space:pre;letter-spacing:-0.25px;font-size:9.8px;">0,209</div>
<div style="left:1223px;top:1067px;width:60px;height:13px;line-height:13px;text-align:right;font-size:10px;white-space:pre;letter-spacing:-0.25px;font-size:9.8px;">0,171</div>
<div style="left:1253px;top:1067px;width:60px;height:13px;line-height:13px;text-align:right;font-size:10px;white-space:pre;letter-spacing:-0.25px;font-size:9.8px;">0,207</div>
<div style="left:1446px;top:1067px;height:13px;line-height:13px;font-size:10px;white-space:pre;letter-spacing:-0.25px;font-size:9.8px;">07  Ion chromatography</div>
<div style="left:1600px;top:1067px;width:90px;height:13px;line-height:13px;text-align:right;font-size:10px;white-space:pre;letter-spacing:-0.25px;font-size:9.8px;">F-pseudosigma =</div>
<div style="left:1662px;top:1067px;width:60px;height:13px;line-height:13px;text-align:right;font-size:10px;white-space:pre;letter-spacing:-0.25px;font-size:9.8px;">0,016</div>
<div style="left:1132px;top:1080px;width:60px;height:13px;line-height:13px;text-align:right;font-size:10px;white-space:pre;letter-spacing:-0.25px;font-size:9.8px;">Maximum =</div>
<div style="left:1193px;top:1080px;width:60px;height:13px;line-height:13px;text-align:right;font-size:10px;white-space:pre;letter-spacing:-0.25px;font-size:9.8px;">0,231</div>
<div style="left:1223px;top:1080px;width:60px;height:13px;line-height:13px;text-align:right;font-size:10px;white-space:pre;letter-spacing:-0.25px;font-size:9.8px;">0,313</div>
<div style="left:1253px;top:1080px;width:60px;height:13px;line-height:13px;text-align:right;font-size:10px;white-space:pre;letter-spacing:-0.25px;font-size:9.8px;">0,26</div>
<div style="left:1446px;top:1080px;height:13px;line-height:13px;font-size:10px;white-space:pre;letter-spacing:-0.25px;font-size:9.8px;">22  Colorimetric</div>
<div style="left:1630px;top:1080px;width:60px;height:13px;line-height:13px;text-align:right;font-size:10px;white-space:pre;letter-spacing:-0.25px;font-size:9.8px;">n =</div>
<div style="left:1662px;top:1080px;width:60px;height:13px;line-height:13px;text-align:right;font-size:10px;white-space:pre;letter-spacing:-0.25px;font-size:9.8px;">54</div>
<div style="left:1194px;top:1040px;width:406px;height:1px;background:#000"></div>
<div style="left:1194px;top:1053px;width:406px;height:1px;background:#000"></div>
<div style="left:1630px;top:1040px;width:124px;height:1px;background:#000"></div>
<div style="left:1761px;top:1026px;width:23px;height:2px;background:#000"></div>
<div style="left:1782px;top:1026px;width:2px;height:62px;background:#000"></div>
<div style="left:1064px;top:1088px;width:872px;height:36px;background:#f0f0f0"></div>
<div style="left:1919px;top:746px;width:17px;height:342px;background:#f0f0f0"></div>
<div style="left:1921px;top:747px;width:13px;height:4px;background:#888"></div>
<svg style="position:absolute;left:1921px;top:753px" width="13" height="10"><path d="M2.5 7 L6.5 3 L10.5 7" stroke="#444" stroke-width="1.4" fill="none"/></svg>
<div style="left:1921px;top:767px;width:13px;height:68px;background:#cdcdcd"></div>
<svg style="position:absolute;left:1921px;top:1074px" width="13" height="10"><path d="M2.5 3 L6.5 7 L10.5 3" stroke="#444" stroke-width="1.4" fill="none"/></svg>
<svg style="position:absolute;left:1068px;top:1090px" width="12" height="12"><path d="M8 2 L4 6 L8 10" stroke="#444" stroke-width="1.4" fill="none"/></svg>
<div style="left:1082px;top:1090px;width:308px;height:12px;background:#cdcdcd"></div>
<svg style="position:absolute;left:1898px;top:1090px" width="12" height="12"><path d="M4 2 L8 6 L4 10" stroke="#444" stroke-width="1.4" fill="none"/></svg>
<div style="left:1915px;top:1090px;width:2px;height:12px;background:#333"></div>
<svg style="position:absolute;left:1075px;top:1107px" width="70" height="14" viewBox="0 0 70 14"><path d="M2.5 2 V12 M10 2 L5 7 L10 12 Z" fill="#aaa" stroke="#aaa"/><path d="M27 2 L22 7 L27 12 Z" fill="#aaa"/><path d="M39 2 L44 7 L39 12 Z" fill="#aaa"/><path d="M56 2 L61 7 L56 12 Z M62.5 2 V12" fill="#aaa" stroke="#aaa"/></svg>
<div style="left:1152px;top:1106px;width:52px;height:17px;border:1px solid #8a8a8a;background:#ececec;text-align:center;line-height:15px;font-size:11.8px;font-weight:normal;color:#111">NIST</div>
<div style="left:1203px;top:1106px;width:50px;height:17px;border:1px solid #8a8a8a;background:#fff;text-align:center;line-height:15px;font-size:11.8px;font-weight:bold;color:#111">NH3</div>
<div style="left:1252px;top:1106px;width:64px;height:17px;border:1px solid #8a8a8a;background:#ececec;text-align:center;line-height:15px;font-size:11.8px;font-weight:normal;color:#111">NH3_O</div>
<div style="left:1315px;top:1106px;width:50px;height:17px;border:1px solid #8a8a8a;background:#ececec;text-align:center;line-height:15px;font-size:11.8px;font-weight:normal;color:#111">NO3</div>
<div style="left:1364px;top:1106px;width:79px;height:17px;border:1px solid #8a8a8a;background:#ececec;text-align:center;line-height:15px;font-size:11.8px;font-weight:normal;color:#111">NO2plus3</div>
<div style="left:1442px;top:1106px;width:52px;height:17px;border:1px solid #8a8a8a;background:#ececec;text-align:center;line-height:15px;font-size:11.8px;font-weight:normal;color:#111">Total</div>
<div style="left:1493px;top:1106px;width:48px;height:17px;border:1px solid #8a8a8a;background:#ececec;text-align:center;line-height:15px;font-size:11.8px;font-weight:normal;color:#111">PO4</div>
<div style="left:1936px;top:679px;width:6px;height:443px;background:#ededed;border-left:1px solid #c9c9c9;border-right:1px solid #c9c9c9;border-top:1px solid #c9c9c9"></div>
<div style="left:1936px;top:864px;width:5px;height:76px;background:#6f6f6f"></div>
<div style="left:1937px;top:896px;width:0;height:0;border-top:4px solid transparent;border-bottom:4px solid transparent;border-left:4px solid #fff"></div>
<div style="left:1942px;top:679px;width:42px;height:443px;background:#f0f0f0;border:1px solid #d0c8c0"></div>
<svg style="position:absolute;left:1945px;top:676px" width="40" height="190" viewBox="0 0 40 190"><g transform="translate(18,21)"><path d="M-2 -11 H2 L3 -8 L6 -9.5 L9 -6.5 L7.5 -3.5 L11 -2 V2 L7.5 3.5 L9 6.5 L6 9.5 L3 7.5 L2 11 H-2 L-3 7.5 L-6 9.5 L-9 6.5 L-7.5 3.5 L-11 2 V-2 L-7.5 -3.5 L-9 -6.5 L-6 -9.5 L-3 -7.5 Z" fill="#e0e0e0" stroke="#a8a8a8"/><circle r="4" fill="#f0f0f0" stroke="#a8a8a8" stroke-width="1.5"/></g><path d="M8 53 H30" stroke="#dcdcdc"/><rect x="10" y="58" width="17" height="8" rx="4" fill="#d8d8d8"/><circle cx="22" cy="62" r="3.5" fill="#fafafa"/><path d="M9 87 L9 107 L28 107 Z" fill="none" stroke="#c8c8c8" stroke-width="1.5"/><path d="M13 98 L13 103 L18 103 Z" fill="none" stroke="#c8c8c8"/><path d="M8 124 H16 L18 126 H29 V141 H8 Z" fill="#e8e8e8" stroke="#c8c8c8"/><rect x="4.5" y="152.5" width="30" height="32" rx="3" fill="#f0f0f0" stroke="#b8b8b8"/><path d="M10 157 H25 V180 H10 Z" fill="#f6f7fb" stroke="#6a7fa6"/><rect x="10" y="156" width="15" height="3" fill="#3a6fb0"/><path d="M13 164 H22 M13 169 H22 M13 174 H20" stroke="#777" stroke-width="1"/><path d="M20 180 L30 168 L32 170 L22 182 Z" fill="#f0a020"/></svg>
<div class="t" style="left:-2px;top:1131px;font-size:12.4px">/desktop.E01/vol_vol3/$Unalloc/Unalloc_211630_106061824_14444470272&gt;&gt;Carved-127107072.xlsx</div></body></html>
